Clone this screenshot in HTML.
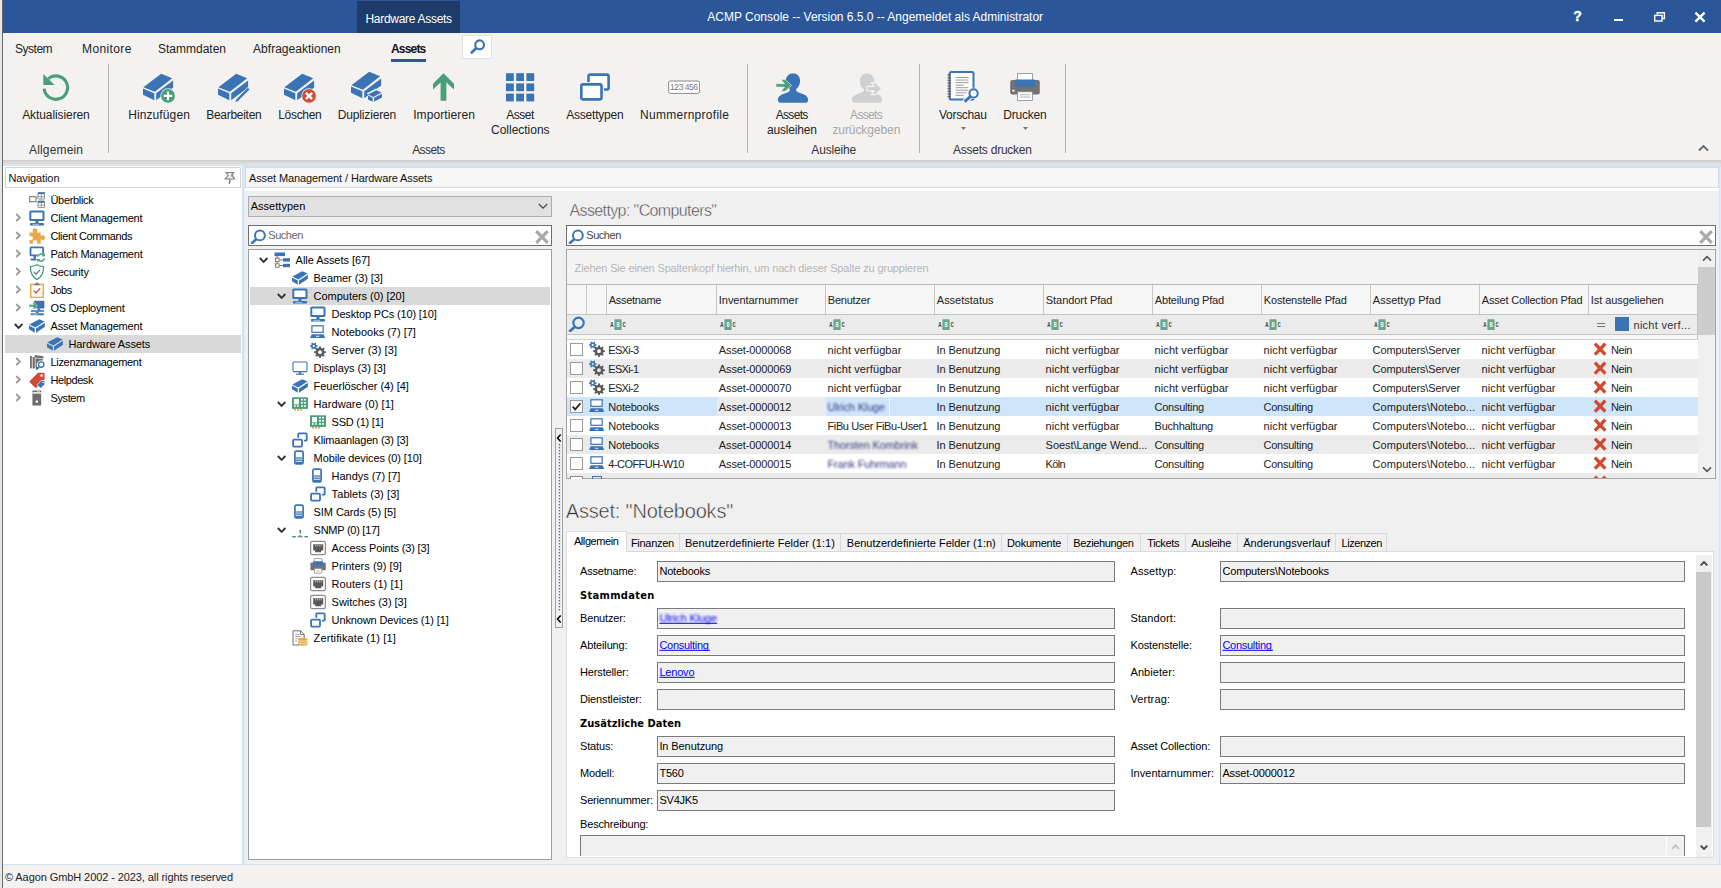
<!DOCTYPE html>
<html lang="de"><head><meta charset="utf-8"><title>ACMP Console</title>
<style>
html,body{margin:0;padding:0;width:1721px;height:888px;overflow:hidden;background:#f0f0f0;font-family:"Liberation Sans",sans-serif}
#app{position:relative;width:1721px;height:888px;overflow:hidden}
#app>div{position:absolute}
#tx{position:absolute;left:0;top:0;pointer-events:none}
#tx text{font-family:"Liberation Sans",sans-serif;white-space:pre}
</style></head><body><div id="app">
<div style="left:0px;top:0px;width:1721px;height:33px;background:#2b579a;"></div>
<div style="left:357px;top:1px;width:103px;height:32px;background:#1e3c6b;"></div>
<svg style="position:absolute;left:1571px;top:8px" width="14" height="17" viewBox="0 0 14 17"><text x="6.6" y="13.4" font-family="Liberation Sans, sans-serif" font-weight="bold" font-size="14" fill="#fff" stroke="#fff" stroke-width="0.4" text-anchor="middle">?</text></svg>
<div style="left:1614px;top:19px;width:9px;height:2px;background:#fff;"></div>
<svg style="position:absolute;left:1653px;top:11px" width="13" height="12" viewBox="0 0 13 12"><path d="M4.2,3.6V1.7h7.2v5.8h-2" fill="none" stroke="#fff" stroke-width="1.4"/><rect x="1.7" y="4.4" width="7.3" height="5.6" fill="none" stroke="#fff" stroke-width="1.4"/></svg>
<svg style="position:absolute;left:1694px;top:11px" width="12" height="12" viewBox="0 0 12 12"><path d="M1.4,1.6L10.6,10.6M10.6,1.6L1.4,10.6" stroke="#fff" stroke-width="2.3"/></svg>
<div style="left:0px;top:33px;width:1721px;height:127px;background:#f3f2f1;"></div>
<div style="left:391px;top:59px;width:35px;height:3px;background:#2b579a;"></div>
<div style="left:462px;top:35px;width:30px;height:24px;background:#fff;border:1px solid #e1dfdd;box-sizing:border-box;"></div>
<svg style="position:absolute;left:469px;top:39px" width="16" height="16" viewBox="0 0 16 16"><circle cx="10.6" cy="5.8" r="4.4" fill="#fff" stroke="#3b74b5" stroke-width="2.1"/><path d="M7.4,9 L1.9,14.2" stroke="#3b74b5" stroke-width="2.6"/></svg>
<div style="left:108px;top:64px;width:1px;height:89px;background:#b5b3b1;"></div>
<div style="left:747px;top:64px;width:1px;height:89px;background:#b5b3b1;"></div>
<div style="left:919px;top:64px;width:1px;height:89px;background:#b5b3b1;"></div>
<div style="left:1065px;top:64px;width:1px;height:89px;background:#b5b3b1;"></div>
<svg style="position:absolute;left:40px;top:71px" width="32" height="32" viewBox="0 0 32 32"><path d="M8.4,7.6 A11.7,11.7 0 1 1 4.2,17.6" fill="none" stroke="#4a9e7a" stroke-width="3.1"/><polygon points="3.3,2.9 3.3,14 14.6,14" fill="#4a9e7a"/></svg>
<svg style="position:absolute;left:143px;top:71px" width="32" height="32" viewBox="0 0 32 32"><polygon points="0.4,16.2 18.2,2.8 29.2,7.2 11.8,20.8" fill="#3b74b5"/><polygon points="0,17.6 11.3,22.3 11.3,29.3 0,23.8" fill="#3b74b5"/><polygon points="13.2,22.3 30.1,9.6 30.1,16.6 13.2,29.3" fill="#3b74b5"/><circle cx="25" cy="24.9" r="7.6" fill="#f3f2f1"/><circle cx="25" cy="24.9" r="6.9" fill="#4a9e7a"/><path d="M25,20.6v8.6M20.7,24.9h8.6" stroke="#fff" stroke-width="2.1"/></svg>
<svg style="position:absolute;left:218px;top:71px" width="32" height="32" viewBox="0 0 32 32"><polygon points="0.4,16.2 18.2,2.8 29.2,7.2 11.8,20.8" fill="#3b74b5"/><polygon points="0,17.6 11.3,22.3 11.3,29.3 0,23.8" fill="#3b74b5"/><polygon points="13.2,22.3 30.1,9.6 30.1,16.6 13.2,29.3" fill="#3b74b5"/><path d="M31.3,17.5 L17.5,31.5" stroke="#f3f2f1" stroke-width="4.2"/><path d="M30.6,17.6 L19.6,28.8" stroke="#3b74b5" stroke-width="2.3"/><polygon points="18.9,27.6 20.9,29.6 17.3,31.2" fill="#3b74b5"/></svg>
<svg style="position:absolute;left:284px;top:71px" width="32" height="32" viewBox="0 0 32 32"><polygon points="0.4,16.2 18.2,2.8 29.2,7.2 11.8,20.8" fill="#3b74b5"/><polygon points="0,17.6 11.3,22.3 11.3,29.3 0,23.8" fill="#3b74b5"/><polygon points="13.2,22.3 30.1,9.6 30.1,16.6 13.2,29.3" fill="#3b74b5"/><circle cx="25" cy="24.9" r="7.6" fill="#f3f2f1"/><circle cx="25" cy="24.9" r="6.9" fill="#d04a35"/><path d="M21.9,21.8l6.2,6.2M28.1,21.8l-6.2,6.2" stroke="#fff" stroke-width="2.4"/></svg>
<svg style="position:absolute;left:351px;top:71px" width="32" height="32" viewBox="0 0 32 32"><polygon points="0.4,14.2 18.2,0.8 29.2,5.2 11.8,18.8" fill="#3b74b5"/><polygon points="0,15.6 11.3,20.3 11.3,27.3 0,21.8" fill="#3b74b5"/><polygon points="13.2,20.3 30.1,7.6 30.1,14.6 13.2,27.3" fill="#3b74b5"/><polygon points="15.5,22.5 25,17.6 32.5,21.3 22.5,26.6" fill="#f3f2f1"/><polygon points="17.2,23.4 25.2,19.3 30.6,21.6 22.3,25.9" fill="#3b74b5"/><polygon points="17,24.6 21.7,26.8 21.7,30.8 17,28.4" fill="#3b74b5"/><polygon points="23.1,26.8 31,22.7 31,26.6 23.1,30.8" fill="#3b74b5"/></svg>
<svg style="position:absolute;left:428px;top:71px" width="32" height="32" viewBox="0 0 32 32"><polygon points="15.5,2.2 26,12.7 26,18.6 18.4,11.4 18.4,29.7 12.6,29.7 12.6,11.4 5,18.6 5,12.7" fill="#4a9e7a"/></svg>
<svg style="position:absolute;left:504px;top:71px" width="32" height="32" viewBox="0 0 32 32"><rect x="2.0" y="2.2" width="7.8" height="7.8" fill="#3b74b5"/><rect x="12.2" y="2.2" width="7.8" height="7.8" fill="#3b74b5"/><rect x="22.4" y="2.2" width="7.8" height="7.8" fill="#3b74b5"/><rect x="2.0" y="12.399999999999999" width="7.8" height="7.8" fill="#3b74b5"/><rect x="12.2" y="12.399999999999999" width="7.8" height="7.8" fill="#3b74b5"/><rect x="22.4" y="12.399999999999999" width="7.8" height="7.8" fill="#3b74b5"/><rect x="2.0" y="22.599999999999998" width="7.8" height="7.8" fill="#3b74b5"/><rect x="12.2" y="22.599999999999998" width="7.8" height="7.8" fill="#3b74b5"/><rect x="22.4" y="22.599999999999998" width="7.8" height="7.8" fill="#3b74b5"/></svg>
<svg style="position:absolute;left:579px;top:71px" width="32" height="32" viewBox="0 0 32 32"><rect x="9.5" y="3.6" width="20.1" height="14.9" rx="1.8" fill="#fff" stroke="#3b74b5" stroke-width="2.6"/><rect x="2.3" y="13.4" width="20.2" height="15" rx="1.8" fill="#f3f2f1" stroke="#f3f2f1" stroke-width="5"/><rect x="2.3" y="13.4" width="20.2" height="15" rx="1.8" fill="#fff" stroke="#3b74b5" stroke-width="2.6"/></svg>
<svg style="position:absolute;left:668px;top:71px" width="32" height="32" viewBox="0 0 32 32"><rect x="0.6" y="10" width="31" height="12.4" rx="2" fill="#fff" stroke="#8a8a8a" stroke-width="1"/><text x="16.1" y="19.3" font-family="Liberation Sans, sans-serif" font-size="8.5" fill="#777" text-anchor="middle" textLength="28">123 456</text></svg>
<svg style="position:absolute;left:776px;top:71px" width="32" height="32" viewBox="0 0 32 32"><path d="M16.8,2.3 c4.4,0 7.3,3.3 7.3,7.6 c0,3.6 -1.9,6.6 -3.9,8.2 c-0.3,1.8 0.6,2.7 2.6,3.4 c5.6,1.9 9.3,3.3 9.3,7.6 c0,1.7 -1,2.6 -2.6,2.6 h-25 c-1.7,0 -2.6,-0.9 -2.6,-2.6 c0,-4.3 3.7,-5.7 9.3,-7.6 c2,-0.7 2.9,-1.6 2.6,-3.4 c-2,-1.6 -3.9,-4.6 -3.9,-8.2 c0,-4.3 2.9,-7.6 7.3,-7.6z" fill="#3b74b5"/><polygon points="0,12.7 8.5,12.7 5.2,8.6 9.2,8.6 15.6,14.4 9.2,20.2 5.2,20.2 8.5,16.1 0,16.1" fill="#4a9e7a" stroke="#f3f2f1" stroke-width="0.6"/></svg>
<svg style="position:absolute;left:850px;top:71px" width="32" height="32" viewBox="0 0 32 32"><path d="M16.8,2.3 c4.4,0 7.3,3.3 7.3,7.6 c0,3.6 -1.9,6.6 -3.9,8.2 c-0.3,1.8 0.6,2.7 2.6,3.4 c5.6,1.9 9.3,3.3 9.3,7.6 c0,1.7 -1,2.6 -2.6,2.6 h-25 c-1.7,0 -2.6,-0.9 -2.6,-2.6 c0,-4.3 3.7,-5.7 9.3,-7.6 c2,-0.7 2.9,-1.6 2.6,-3.4 c-2,-1.6 -3.9,-4.6 -3.9,-8.2 c0,-4.3 2.9,-7.6 7.3,-7.6z" fill="#d0d0d0"/><polygon points="17,15.4 24.3,15.4 21.5,11.6 25.5,11.6 31.6,17.6 25.5,23.6 21.5,23.6 24.3,19.8 17,19.8" fill="#d0d0d0" stroke="#f3f2f1" stroke-width="1.3"/></svg>
<svg style="position:absolute;left:947px;top:71px" width="32" height="32" viewBox="0 0 32 32"><rect x="2.7" y="1" width="23.8" height="27.6" rx="1.6" fill="#fff" stroke="#3b74b5" stroke-width="2"/><rect x="0.6" y="3.3" width="3.4" height="1.5" fill="#666"/><rect x="0.6" y="6.0" width="3.4" height="1.5" fill="#666"/><rect x="0.6" y="8.7" width="3.4" height="1.5" fill="#666"/><rect x="0.6" y="11.400000000000002" width="3.4" height="1.5" fill="#666"/><rect x="0.6" y="14.100000000000001" width="3.4" height="1.5" fill="#666"/><rect x="0.6" y="16.8" width="3.4" height="1.5" fill="#666"/><rect x="0.6" y="19.500000000000004" width="3.4" height="1.5" fill="#666"/><rect x="0.6" y="22.200000000000003" width="3.4" height="1.5" fill="#666"/><rect x="0.6" y="24.900000000000002" width="3.4" height="1.5" fill="#666"/><rect x="8.6" y="6.0" width="13" height="1" fill="#9a9a9a"/><rect x="8.6" y="8.55" width="13" height="1" fill="#9a9a9a"/><rect x="8.6" y="11.1" width="13" height="1" fill="#9a9a9a"/><rect x="8.6" y="13.649999999999999" width="8" height="1" fill="#9a9a9a"/><rect x="8.6" y="16.2" width="13" height="1" fill="#9a9a9a"/><rect x="8.6" y="18.75" width="13" height="1" fill="#9a9a9a"/><rect x="8.6" y="21.299999999999997" width="11" height="1" fill="#9a9a9a"/><rect x="8.6" y="23.849999999999998" width="8" height="1" fill="#9a9a9a"/><path d="M23.6,25.6 L17,31.2" stroke="#f3f2f1" stroke-width="5"/><circle cx="26.6" cy="22.4" r="5.6" fill="#f3f2f1"/><path d="M23.6,25.4 L17.6,30.6" stroke="#3b74b5" stroke-width="2.8"/><circle cx="26.6" cy="22.4" r="4.1" fill="#fff" stroke="#3b74b5" stroke-width="2"/></svg>
<svg style="position:absolute;left:960px;top:126.6px" width="7" height="4" viewBox="0 0 7 4"><polygon points="1,0 6,0 3.5,3" fill="#777"/></svg>
<svg style="position:absolute;left:1009px;top:71px" width="32" height="32" viewBox="0 0 32 32"><rect x="1.2" y="9" width="29.6" height="14.6" rx="2" fill="#727272"/><rect x="8.4" y="2.6" width="15.2" height="8" fill="#fff" stroke="#8a8a8a" stroke-width="0.8"/><rect x="6" y="8.4" width="20" height="7.4" rx="1" fill="#3b74b5"/><rect x="8.4" y="20.8" width="15.2" height="8.6" fill="#fff" stroke="#8a8a8a" stroke-width="0.8"/><rect x="10.8" y="23.3" width="10.4" height="0.9" fill="#aaa"/><rect x="10.8" y="25.6" width="10.4" height="0.9" fill="#aaa"/><rect x="3.2" y="18.8" width="2.4" height="1.8" rx="0.6" fill="#fff"/></svg>
<svg style="position:absolute;left:1022px;top:126.6px" width="7" height="4" viewBox="0 0 7 4"><polygon points="1,0 6,0 3.5,3" fill="#777"/></svg>
<svg style="position:absolute;left:1698px;top:144px" width="11" height="8" viewBox="0 0 11 8"><path d="M1,6.5L5.5,2L10,6.5" fill="none" stroke="#666" stroke-width="1.8"/></svg>
<div style="left:0;top:160px;width:1721px;height:5px;background:linear-gradient(#cdcdcd,#e6e6e6)"></div>
<div style="left:0px;top:165px;width:1721px;height:700px;background:#f0f0f0;"></div>
<div style="left:0px;top:165px;width:1721px;height:2px;background:#cfe5f8;"></div>
<div style="left:241px;top:167px;width:3px;height:697px;background:#cfe6fa;"></div>
<div style="left:244px;top:167px;width:1px;height:697px;background:#e0ebf5;"></div>
<div style="left:1719px;top:167px;width:1px;height:697px;background:#cfe6fa;"></div>
<div style="left:1720px;top:167px;width:1px;height:697px;background:#ddedfb;"></div>
<div style="left:0px;top:864px;width:1721px;height:1px;background:#cde4f7;"></div>
<div style="left:0px;top:865px;width:1721px;height:23px;background:#f3f2f1;"></div>
<div style="left:0px;top:0px;width:2px;height:888px;background:#e4e6e8;"></div>
<div style="left:2px;top:0px;width:1px;height:888px;background:#6a6a6a;"></div>
<div style="left:3px;top:166px;width:239px;height:698px;background:#fff;"></div>
<div style="left:5px;top:167px;width:236px;height:21px;background:#fff;border:1px solid #d4d4d4;box-sizing:border-box;"></div>
<svg style="position:absolute;left:224px;top:171px" width="12" height="14" viewBox="0 0 12 14"><path d="M2,1.5H9.6L8.4,4.4L10.6,8H1.2L4.2,4.4Z" fill="#ececec" stroke="#7d7d7d" stroke-width="1.1"/><path d="M8,2.4v3.4" stroke="#8a8a8a" stroke-width="1.4"/><path d="M5.9,8.2L5.3,12.8" stroke="#7d7d7d" stroke-width="1.4"/></svg>
<svg style="position:absolute;left:29px;top:192px" width="16" height="16" viewBox="0 0 16 16"><rect x="0.7" y="4.7" width="6.4" height="5" fill="#fff" stroke="#777" stroke-width="1.1"/><rect x="9" y="0.4" width="6.6" height="6.6" rx="0.6" fill="#fff" stroke="#8a8a8a" stroke-width="1"/><rect x="9" y="0.4" width="6.6" height="1.8" fill="#3b74b5"/><path d="M12.3,2.4v4.6M9,4.6h6.6" stroke="#8a8a8a" stroke-width="0.8"/><rect x="9" y="9" width="6.6" height="6.6" rx="0.6" fill="#fff" stroke="#8a8a8a" stroke-width="1"/><rect x="9" y="9" width="6.6" height="1.8" fill="#3b74b5"/><path d="M12.3,11v4.6M9,13.2h6.6" stroke="#8a8a8a" stroke-width="0.8"/></svg>
<svg style="position:absolute;left:29px;top:210px" width="16" height="16" viewBox="0 0 16 16"><rect x="1.3" y="1.5" width="13.2" height="8.6" rx="0.6" fill="#fff" stroke="#3b74b5" stroke-width="2"/><rect x="6.4" y="11" width="3.1" height="2" fill="#3b74b5"/><rect x="0.9" y="12.9" width="14.2" height="2.7" rx="1.2" fill="#3b74b5"/><rect x="3.4" y="13.9" width="6.6" height="0.8" fill="#bcd3ec"/></svg>
<svg style="position:absolute;left:15.4px;top:213.4px" width="7" height="9" viewBox="0 0 7 9"><path d="M1.2,1 L4.8,4.5 L1.2,8" fill="none" stroke="#9a9a9a" stroke-width="1.8"/></svg>
<svg style="position:absolute;left:29px;top:228px" width="16" height="16" viewBox="0 0 16 16"><path transform="translate(8,7.95) scale(1.2) translate(-8.3,-8.55)" d="M2,5.6h3.2c-0.9,-1.2 -0.8,-3.4 1.4,-3.4c2.2,0 2.3,2.2 1.4,3.4h3.4v3c1.2,-0.9 3.6,-0.8 3.6,1.4c0,2.2 -2.4,2.3 -3.6,1.4v3.6h-3.2c0.7,-1.2 0.6,-2.8 -1.5,-2.8c-2.1,0 -2.2,1.6 -1.5,2.8h-3.2v-3.4c1.2,0.8 2.8,0.6 2.8,-1.3c0,-1.9 -1.6,-2.1 -2.8,-1.3z" fill="#e8a94e"/></svg>
<svg style="position:absolute;left:15.4px;top:231.4px" width="7" height="9" viewBox="0 0 7 9"><path d="M1.2,1 L4.8,4.5 L1.2,8" fill="none" stroke="#9a9a9a" stroke-width="1.8"/></svg>
<svg style="position:absolute;left:29px;top:246px" width="16" height="16" viewBox="0 0 16 16"><rect x="1.5" y="1.3" width="12.6" height="8" rx="0.6" fill="#fff" stroke="#3b74b5" stroke-width="1.8"/><rect x="4.6" y="10" width="2.4" height="2.6" fill="#3b74b5"/><rect x="1.4" y="12.6" width="6.4" height="1.8" rx="0.8" fill="#3b74b5"/><circle cx="12" cy="11.6" r="4.6" fill="#fff"/><path d="M8.6,10.8 a3.5,3.5 0 0 1 6,-1.6 M15.4,12.4 a3.5,3.5 0 0 1 -6,1.6" fill="none" stroke="#4a9e7a" stroke-width="1.5"/><polygon points="15.8,7 15.8,10.4 12.6,10.2" fill="#4a9e7a"/><polygon points="8.2,16.2 8.2,12.8 11.4,13" fill="#4a9e7a"/></svg>
<svg style="position:absolute;left:15.4px;top:249.4px" width="7" height="9" viewBox="0 0 7 9"><path d="M1.2,1 L4.8,4.5 L1.2,8" fill="none" stroke="#9a9a9a" stroke-width="1.8"/></svg>
<svg style="position:absolute;left:29px;top:264px" width="16" height="16" viewBox="0 0 16 16"><path d="M8,0.8c2,1.2 4.2,1.7 6.6,1.8c0,6 -1.6,10.4 -6.6,13c-5,-2.6 -6.6,-7 -6.6,-13c2.4,-0.1 4.6,-0.6 6.6,-1.8z" fill="#fff" stroke="#3a9a72" stroke-width="1.2"/><path d="M4.8,7.8l2.2,2.4l4.2,-4.6" fill="none" stroke="#777" stroke-width="1.3"/></svg>
<svg style="position:absolute;left:15.4px;top:267.4px" width="7" height="9" viewBox="0 0 7 9"><path d="M1.2,1 L4.8,4.5 L1.2,8" fill="none" stroke="#9a9a9a" stroke-width="1.8"/></svg>
<svg style="position:absolute;left:29px;top:282px" width="16" height="16" viewBox="0 0 16 16"><rect x="1.8" y="2.4" width="12.4" height="13" fill="#fff" stroke="#e8a94e" stroke-width="1.5"/><path d="M5.4,3.2v-1.4h1.4c0,-1.8 2.4,-1.8 2.4,0h1.4v1.4z" fill="#777"/><path d="M4.8,8.6l2.2,2.4l4.2,-4.6" fill="none" stroke="#d04a35" stroke-width="1.4"/></svg>
<svg style="position:absolute;left:15.4px;top:285.4px" width="7" height="9" viewBox="0 0 7 9"><path d="M1.2,1 L4.8,4.5 L1.2,8" fill="none" stroke="#9a9a9a" stroke-width="1.8"/></svg>
<svg style="position:absolute;left:29px;top:300px" width="16" height="16" viewBox="0 0 16 16"><rect x="5" y="0.8" width="10.4" height="7.6" rx="0.6" fill="#3b74b5"/><rect x="8.6" y="8.4" width="2.6" height="2.2" fill="#3b74b5"/><rect x="2" y="10.2" width="13" height="1.6" fill="#3b74b5"/><rect x="7" y="11.8" width="2.4" height="1.4" fill="#3b74b5"/><rect x="1.6" y="13.2" width="13.4" height="2" rx="0.9" fill="#3b74b5"/><rect x="3.6" y="13.8" width="5" height="0.7" fill="#cfe0f2"/><polygon points="0,4.6 4.6,4.6 3,2.6 5.4,2.6 8.4,5.8 5.4,9 3,9 4.6,7 0,7" fill="#4a9e7a" stroke="#fff" stroke-width="0.5"/></svg>
<svg style="position:absolute;left:15.4px;top:303.4px" width="7" height="9" viewBox="0 0 7 9"><path d="M1.2,1 L4.8,4.5 L1.2,8" fill="none" stroke="#9a9a9a" stroke-width="1.8"/></svg>
<svg style="position:absolute;left:29px;top:318px" width="16" height="16" viewBox="0 0 16 16"><polygon points="0.3,6.5 10.2,1.2 15.6,3.6 6.3,9.5" fill="#3b74b5"/><polygon points="0,7.5 5.8,10.5 5.8,14.7 0,11.2" fill="#3b74b5"/><polygon points="7,10.5 15.9,4.8 15.9,8.7 7,14.7" fill="#3b74b5"/></svg>
<svg style="position:absolute;left:13.8px;top:323.4px" width="10" height="7" viewBox="0 0 10 7"><path d="M0.8,1 L4.6,4.8 L8.4,1" fill="none" stroke="#333" stroke-width="1.9"/></svg>
<div style="left:5px;top:335px;width:236px;height:18px;background:#d9d9d9;"></div>
<svg style="position:absolute;left:47px;top:336px" width="16" height="16" viewBox="0 0 16 16"><polygon points="0.3,6.5 10.2,1.2 15.6,3.6 6.3,9.5" fill="#3b74b5"/><polygon points="0,7.5 5.8,10.5 5.8,14.7 0,11.2" fill="#3b74b5"/><polygon points="7,10.5 15.9,4.8 15.9,8.7 7,14.7" fill="#3b74b5"/></svg>
<svg style="position:absolute;left:29px;top:354px" width="16" height="16" viewBox="0 0 16 16"><rect x="1" y="2" width="1.8" height="12.4" fill="#6e6e6e"/><rect x="3.6" y="3" width="2.2" height="11.4" fill="#6e6e6e"/><polygon points="5.6,1 14.4,2.2 14.2,4.4 5.8,3.4" fill="#6e6e6e"/><polygon points="6.4,4.2 13.8,5 12,14.4 6.6,14.4" fill="#6e6e6e"/><circle cx="12" cy="10.8" r="4.3" fill="#fff"/><path d="M9.8,13 L7.2,15.6" stroke="#3b74b5" stroke-width="1.8"/><circle cx="12.2" cy="10.6" r="2.7" fill="#fff" stroke="#3b74b5" stroke-width="1.4"/></svg>
<svg style="position:absolute;left:15.4px;top:357.4px" width="7" height="9" viewBox="0 0 7 9"><path d="M1.2,1 L4.8,4.5 L1.2,8" fill="none" stroke="#9a9a9a" stroke-width="1.8"/></svg>
<svg style="position:absolute;left:29px;top:372px" width="16" height="16" viewBox="0 0 16 16"><path d="M9,0.8h5.6c0.6,0 1,0.4 1,1v5.6l-8,8c-0.5,0.5 -1.1,0.5 -1.6,0l-5,-5c-0.5,-0.5 -0.5,-1.1 0,-1.6z" fill="#d04a35"/><circle cx="12.6" cy="3.6" r="1.3" fill="#fff"/><path d="M12,8.6h3.2c0.4,0 0.6,0.2 0.6,0.6v3.2l-3.6,3.6c-0.3,0.3 -0.7,0.3 -1,0l-2.6,-2.6c-0.3,-0.3 -0.3,-0.7 0,-1z" fill="#3b74b5" stroke="#fff" stroke-width="0.7"/><circle cx="14" cy="10.4" r="0.7" fill="#fff"/></svg>
<svg style="position:absolute;left:15.4px;top:375.4px" width="7" height="9" viewBox="0 0 7 9"><path d="M1.2,1 L4.8,4.5 L1.2,8" fill="none" stroke="#9a9a9a" stroke-width="1.8"/></svg>
<svg style="position:absolute;left:29px;top:390px" width="16" height="16" viewBox="0 0 16 16"><rect x="3.4" y="0.6" width="8.8" height="15" rx="0.6" fill="#6e6e6e"/><rect x="3.4" y="2.2" width="8.8" height="1.4" fill="#fff"/><rect x="8.2" y="1" width="2.6" height="0.8" fill="#ddd"/><circle cx="7.8" cy="11.6" r="1.3" fill="#fff"/></svg>
<svg style="position:absolute;left:15.4px;top:393.4px" width="7" height="9" viewBox="0 0 7 9"><path d="M1.2,1 L4.8,4.5 L1.2,8" fill="none" stroke="#9a9a9a" stroke-width="1.8"/></svg>
<div style="left:245px;top:167px;width:1474px;height:21px;background:#f6f6f6;border:1px solid #dadada;box-sizing:border-box;"></div>
<div style="left:245px;top:188px;width:1474px;height:3px;background:#fff;"></div>
<div style="left:248px;top:196px;width:304px;height:21px;background:#e1e1e1;border:1px solid #adadad;box-sizing:border-box;"></div>
<svg style="position:absolute;left:538px;top:203px" width="10" height="7" viewBox="0 0 10 7"><path d="M0.8,1 L5,5.2 L9.2,1" fill="none" stroke="#444" stroke-width="1.2"/></svg>
<div style="left:248px;top:225px;width:304px;height:21px;background:#fff;border:1px solid #6d6d6d;box-sizing:border-box;"></div>
<svg style="position:absolute;left:250px;top:228px" width="16" height="16" viewBox="0 0 16 16"><circle cx="9.9" cy="7.4" r="4.9" fill="none" stroke="#3b74b5" stroke-width="2"/><path d="M6.5,11 L1.2,15.8" stroke="#3b74b5" stroke-width="2.5" stroke-linecap="butt"/></svg>
<svg style="position:absolute;left:535px;top:230px" width="14" height="14" viewBox="0 0 14 14"><path d="M1.2,1.2 L12.8,12.8 M12.8,1.2 L1.2,12.8" stroke="#a9a9a9" stroke-width="3.2" stroke-linecap="butt"/></svg>
<div style="left:248px;top:249px;width:304px;height:611px;background:#fff;border:1px solid #9a9ea5;box-sizing:border-box;"></div>
<svg style="position:absolute;left:274px;top:252px" width="16" height="16" viewBox="0 0 16 16"><rect x="0.5" y="0.5" width="10.5" height="3.6" fill="#3b74b5"/><rect x="9" y="6.2" width="7" height="3.4" fill="#3b74b5"/><rect x="9" y="11.8" width="7" height="3.4" fill="#3b74b5"/><path d="M3.2,4v9.6M5.5,7.9h3.5M5.5,13.5h3.5" stroke="#777" stroke-width="1" fill="none"/><rect x="1.5" y="6.2" width="3.6" height="3.4" fill="#fff" stroke="#777" stroke-width="1"/><rect x="1.5" y="11.8" width="3.6" height="3.4" fill="#fff" stroke="#777" stroke-width="1"/></svg>
<svg style="position:absolute;left:258.8px;top:257.2px" width="10" height="7" viewBox="0 0 10 7"><path d="M0.8,1 L4.6,4.8 L8.4,1" fill="none" stroke="#333" stroke-width="1.9"/></svg>
<svg style="position:absolute;left:292px;top:270px" width="16" height="16" viewBox="0 0 16 16"><polygon points="0.3,6.5 10.2,1.2 15.6,3.6 6.3,9.5" fill="#3b74b5"/><polygon points="0,7.5 5.8,10.5 5.8,14.7 0,11.2" fill="#3b74b5"/><polygon points="7,10.5 15.9,4.8 15.9,8.7 7,14.7" fill="#3b74b5"/></svg>
<div style="left:250px;top:287px;width:300px;height:18px;background:#d9d9d9;"></div>
<svg style="position:absolute;left:292px;top:288px" width="16" height="16" viewBox="0 0 16 16"><rect x="1.3" y="1.5" width="13.2" height="8.6" rx="0.6" fill="#fff" stroke="#3b74b5" stroke-width="2"/><rect x="6.4" y="11" width="3.1" height="2" fill="#3b74b5"/><rect x="0.9" y="12.9" width="14.2" height="2.7" rx="1.2" fill="#3b74b5"/><rect x="3.4" y="13.9" width="6.6" height="0.8" fill="#bcd3ec"/></svg>
<svg style="position:absolute;left:276.8px;top:293.2px" width="10" height="7" viewBox="0 0 10 7"><path d="M0.8,1 L4.6,4.8 L8.4,1" fill="none" stroke="#333" stroke-width="1.9"/></svg>
<svg style="position:absolute;left:310px;top:306px" width="16" height="16" viewBox="0 0 16 16"><rect x="1.3" y="1.5" width="13.2" height="8.6" rx="0.6" fill="#fff" stroke="#3b74b5" stroke-width="2"/><rect x="6.4" y="11" width="3.1" height="2" fill="#3b74b5"/><rect x="0.9" y="12.9" width="14.2" height="2.7" rx="1.2" fill="#3b74b5"/><rect x="3.4" y="13.9" width="6.6" height="0.8" fill="#bcd3ec"/></svg>
<svg style="position:absolute;left:310px;top:324px" width="16" height="16" viewBox="0 0 16 16"><rect x="1.9" y="1.8" width="11.3" height="6.5" fill="#fff" stroke="#3b74b5" stroke-width="1.2"/><polygon points="1.6,10.2 13.6,10.2 15.2,14 0.1,14" fill="#3b74b5"/><rect x="6" y="11.8" width="3.4" height="1" fill="#dce8f5"/></svg>
<svg style="position:absolute;left:310px;top:342px" width="16" height="16" viewBox="0 0 16 16"><path d="M15.97,9.61 L15.97,10.79 L14.11,11.45 L13.79,12.23 L14.64,14.01 L13.81,14.84 L12.03,13.99 L11.25,14.31 L10.59,16.17 L9.41,16.17 L8.75,14.31 L7.97,13.99 L6.19,14.84 L5.36,14.01 L6.21,12.23 L5.89,11.45 L4.03,10.79 L4.03,9.61 L5.89,8.95 L6.21,8.17 L5.36,6.39 L6.19,5.56 L7.97,6.41 L8.75,6.09 L9.41,4.23 L10.59,4.23 L11.25,6.09 L12.03,6.41 L13.81,5.56 L14.64,6.39 L13.79,8.17 L14.11,8.95Z M11.90,10.20 A1.9,1.9 0 1 0 8.10,10.20 A1.9,1.9 0 1 0 11.90,10.20Z" fill="#5c5c5c" fill-rule="evenodd"/><path d="M7.57,3.49 L7.57,4.51 L6.10,4.99 L5.76,5.58 L6.07,7.09 L5.19,7.60 L4.04,6.58 L3.36,6.58 L2.21,7.60 L1.33,7.09 L1.64,5.58 L1.30,4.99 L-0.17,4.51 L-0.17,3.49 L1.30,3.01 L1.64,2.42 L1.33,0.91 L2.21,0.40 L3.36,1.42 L4.04,1.42 L5.19,0.40 L6.07,0.91 L5.76,2.42 L6.10,3.01Z M4.80,4.00 A1.1,1.1 0 1 0 2.60,4.00 A1.1,1.1 0 1 0 4.80,4.00Z" fill="#3b74b5" fill-rule="evenodd"/></svg>
<svg style="position:absolute;left:292px;top:360px" width="16" height="16" viewBox="0 0 16 16"><rect x="1" y="2" width="14" height="9.6" rx="1.2" fill="#fff" stroke="#3b74b5" stroke-width="1.1"/><rect x="6.8" y="12" width="2.4" height="1.8" fill="#3b74b5"/><rect x="4" y="13.6" width="8" height="1.2" fill="#3b74b5"/></svg>
<svg style="position:absolute;left:292px;top:378px" width="16" height="16" viewBox="0 0 16 16"><polygon points="0.3,6.5 10.2,1.2 15.6,3.6 6.3,9.5" fill="#3b74b5"/><polygon points="0,7.5 5.8,10.5 5.8,14.7 0,11.2" fill="#3b74b5"/><polygon points="7,10.5 15.9,4.8 15.9,8.7 7,14.7" fill="#3b74b5"/></svg>
<svg style="position:absolute;left:292px;top:396px" width="16" height="16" viewBox="0 0 16 16"><rect x="0" y="1.3" width="16" height="11.6" fill="#4a9e7a"/><rect x="2" y="3" width="5" height="5.4" fill="#fff"/><rect x="9" y="2.9" width="2" height="1.6" fill="#fff"/><rect x="12" y="2.9" width="2" height="1.6" fill="#fff"/><rect x="9" y="6.0" width="2" height="1.6" fill="#fff"/><rect x="12" y="6.0" width="2" height="1.6" fill="#fff"/><rect x="9" y="9.2" width="2" height="1.6" fill="#fff"/><rect x="12" y="9.2" width="2" height="1.6" fill="#fff"/><rect x="2" y="9.2" width="1.7" height="1.6" fill="#fff"/><rect x="5" y="9.2" width="1.7" height="1.6" fill="#fff"/><rect x="2" y="12.9" width="2" height="1.8" fill="#e8a94e"/><rect x="5.2" y="12.9" width="2" height="1.8" fill="#e8a94e"/><rect x="8.2" y="12.9" width="2" height="1.8" fill="#e8a94e"/></svg>
<svg style="position:absolute;left:276.8px;top:401.2px" width="10" height="7" viewBox="0 0 10 7"><path d="M0.8,1 L4.6,4.8 L8.4,1" fill="none" stroke="#333" stroke-width="1.9"/></svg>
<svg style="position:absolute;left:310px;top:414px" width="16" height="16" viewBox="0 0 16 16"><rect x="0" y="1.3" width="16" height="11.6" fill="#4a9e7a"/><rect x="2" y="3" width="5" height="5.4" fill="#fff"/><rect x="9" y="2.9" width="2" height="1.6" fill="#fff"/><rect x="12" y="2.9" width="2" height="1.6" fill="#fff"/><rect x="9" y="6.0" width="2" height="1.6" fill="#fff"/><rect x="12" y="6.0" width="2" height="1.6" fill="#fff"/><rect x="9" y="9.2" width="2" height="1.6" fill="#fff"/><rect x="12" y="9.2" width="2" height="1.6" fill="#fff"/><rect x="2" y="9.2" width="1.7" height="1.6" fill="#fff"/><rect x="5" y="9.2" width="1.7" height="1.6" fill="#fff"/><rect x="2" y="12.9" width="2" height="1.8" fill="#e8a94e"/><rect x="5.2" y="12.9" width="2" height="1.8" fill="#e8a94e"/><rect x="8.2" y="12.9" width="2" height="1.8" fill="#e8a94e"/></svg>
<svg style="position:absolute;left:292px;top:432px" width="16" height="16" viewBox="0 0 16 16"><rect x="6.3" y="1.4" width="8.4" height="7.3" rx="0.8" fill="none" stroke="#3b74b5" stroke-width="1.8"/><rect x="1.1" y="7.7" width="8.9" height="6.9" rx="0.8" fill="#fff" stroke="#fff" stroke-width="4"/><rect x="1.1" y="7.7" width="8.9" height="6.9" rx="0.8" fill="#fff" stroke="#3b74b5" stroke-width="1.8"/></svg>
<svg style="position:absolute;left:292px;top:450px" width="16" height="16" viewBox="0 0 16 16"><rect x="2.9" y="1.1" width="8.2" height="12.8" rx="1.5" fill="#fff" stroke="#3b74b5" stroke-width="1.7"/><rect x="3.6" y="7.4" width="6.8" height="1.2" fill="#3b74b5"/><rect x="3.6" y="9.5" width="6.8" height="1.3" fill="#3b74b5"/><rect x="3.6" y="11.7" width="6.8" height="1.4" fill="#3b74b5"/></svg>
<svg style="position:absolute;left:276.8px;top:455.2px" width="10" height="7" viewBox="0 0 10 7"><path d="M0.8,1 L4.6,4.8 L8.4,1" fill="none" stroke="#333" stroke-width="1.9"/></svg>
<svg style="position:absolute;left:310px;top:468px" width="16" height="16" viewBox="0 0 16 16"><rect x="2.9" y="1.1" width="8.2" height="12.8" rx="1.5" fill="#fff" stroke="#3b74b5" stroke-width="1.7"/><rect x="3.6" y="7.4" width="6.8" height="1.2" fill="#3b74b5"/><rect x="3.6" y="9.5" width="6.8" height="1.3" fill="#3b74b5"/><rect x="3.6" y="11.7" width="6.8" height="1.4" fill="#3b74b5"/></svg>
<svg style="position:absolute;left:310px;top:486px" width="16" height="16" viewBox="0 0 16 16"><rect x="6.3" y="1.4" width="8.4" height="7.3" rx="0.8" fill="none" stroke="#3b74b5" stroke-width="1.8"/><rect x="1.1" y="7.7" width="8.9" height="6.9" rx="0.8" fill="#fff" stroke="#fff" stroke-width="4"/><rect x="1.1" y="7.7" width="8.9" height="6.9" rx="0.8" fill="#fff" stroke="#3b74b5" stroke-width="1.8"/></svg>
<svg style="position:absolute;left:292px;top:504px" width="16" height="16" viewBox="0 0 16 16"><rect x="2.9" y="1.1" width="8.2" height="12.8" rx="1.5" fill="#fff" stroke="#3b74b5" stroke-width="1.7"/><rect x="3.6" y="7.4" width="6.8" height="1.2" fill="#3b74b5"/><rect x="3.6" y="9.5" width="6.8" height="1.3" fill="#3b74b5"/><rect x="3.6" y="11.7" width="6.8" height="1.4" fill="#3b74b5"/></svg>
<svg style="position:absolute;left:292px;top:522px" width="16" height="16" viewBox="0 0 16 16"><rect x="7.5" y="7.8" width="1.5" height="3.6" fill="#2f9a6c"/><rect x="5.6" y="14" width="5" height="1.4" fill="#8a8a8a"/><rect x="7.2" y="13.2" width="2" height="1" fill="#8a8a8a"/><rect x="0.2" y="14" width="3.6" height="1.4" fill="#2f9a6c"/><rect x="12.4" y="14" width="3.6" height="1.4" fill="#2f9a6c"/></svg>
<svg style="position:absolute;left:276.8px;top:527.2px" width="10" height="7" viewBox="0 0 10 7"><path d="M0.8,1 L4.6,4.8 L8.4,1" fill="none" stroke="#333" stroke-width="1.9"/></svg>
<svg style="position:absolute;left:310px;top:540px" width="16" height="16" viewBox="0 0 16 16"><rect x="0.6" y="1.4" width="14.8" height="13.2" rx="1.6" fill="#fff" stroke="#8c8c8c" stroke-width="1.2"/><path d="M3.2,4.2h10v6.4h-2v1.6h-6v-1.6h-2z" fill="#595959"/><rect x="5" y="4.6" width="1.1" height="1.8" fill="#e8a94e"/><rect x="6.9" y="4.6" width="1.1" height="1.8" fill="#e8a94e"/><rect x="8.8" y="4.6" width="1.1" height="1.8" fill="#e8a94e"/><rect x="10.6" y="4.6" width="1.1" height="1.8" fill="#e8a94e"/></svg>
<svg style="position:absolute;left:310px;top:558px" width="16" height="16" viewBox="0 0 16 16"><rect x="0.4" y="4.6" width="15.4" height="7.6" rx="1.2" fill="#727272"/><rect x="4" y="0.6" width="8" height="4.4" rx="0.8" fill="#fff" stroke="#888" stroke-width="0.8"/><rect x="3.2" y="3.2" width="9.6" height="4.2" rx="0.5" fill="#3b74b5"/><rect x="4.4" y="10.4" width="7.4" height="4.8" rx="0.6" fill="#fff" stroke="#888" stroke-width="0.8"/><rect x="6.4" y="12.6" width="3.4" height="0.8" fill="#3b74b5" opacity="0.6"/></svg>
<svg style="position:absolute;left:310px;top:576px" width="16" height="16" viewBox="0 0 16 16"><rect x="0.6" y="1.4" width="14.8" height="13.2" rx="1.6" fill="#fff" stroke="#8c8c8c" stroke-width="1.2"/><path d="M3.2,4.2h10v6.4h-2v1.6h-6v-1.6h-2z" fill="#595959"/><rect x="5" y="4.6" width="1.1" height="1.8" fill="#e8a94e"/><rect x="6.9" y="4.6" width="1.1" height="1.8" fill="#e8a94e"/><rect x="8.8" y="4.6" width="1.1" height="1.8" fill="#e8a94e"/><rect x="10.6" y="4.6" width="1.1" height="1.8" fill="#e8a94e"/></svg>
<svg style="position:absolute;left:310px;top:594px" width="16" height="16" viewBox="0 0 16 16"><rect x="0.6" y="1.4" width="14.8" height="13.2" rx="1.6" fill="#fff" stroke="#8c8c8c" stroke-width="1.2"/><path d="M3.2,4.2h10v6.4h-2v1.6h-6v-1.6h-2z" fill="#595959"/><rect x="5" y="4.6" width="1.1" height="1.8" fill="#e8a94e"/><rect x="6.9" y="4.6" width="1.1" height="1.8" fill="#e8a94e"/><rect x="8.8" y="4.6" width="1.1" height="1.8" fill="#e8a94e"/><rect x="10.6" y="4.6" width="1.1" height="1.8" fill="#e8a94e"/></svg>
<svg style="position:absolute;left:310px;top:612px" width="16" height="16" viewBox="0 0 16 16"><rect x="6.3" y="1.4" width="8.4" height="7.3" rx="0.8" fill="none" stroke="#3b74b5" stroke-width="1.8"/><rect x="1.1" y="7.7" width="8.9" height="6.9" rx="0.8" fill="#fff" stroke="#fff" stroke-width="4"/><rect x="1.1" y="7.7" width="8.9" height="6.9" rx="0.8" fill="#fff" stroke="#3b74b5" stroke-width="1.8"/></svg>
<svg style="position:absolute;left:292px;top:630px" width="16" height="16" viewBox="0 0 16 16"><path d="M1,0.8h7.6l3.6,3.6v4.4h-5v6.2h-6.2z" fill="#fff" stroke="#6e6e6e" stroke-width="1"/><path d="M8.4,0.8v3.8h3.8" fill="none" stroke="#6e6e6e" stroke-width="1"/><path d="M3.2,4.4h3.6M3.2,6.6h5.4M3.2,8.8h2.4M3.2,11h1.8" stroke="#999" stroke-width="0.9"/><ellipse cx="10.8" cy="9.4" rx="5" ry="1.7" fill="#e8a94e"/><ellipse cx="10.8" cy="11.7" rx="5" ry="1.7" fill="#e8a94e"/><ellipse cx="10.8" cy="14" rx="5" ry="1.7" fill="#e8a94e"/><path d="M6,10.5c2,1.2 7.6,1.2 9.6,0M6,12.8c2,1.2 7.6,1.2 9.6,0" stroke="#fff" stroke-width="0.6" fill="none"/></svg>
<div style="left:555px;top:428px;width:8px;height:200px;background:#f0f0f0;border:1px solid #a0a0a0;box-sizing:border-box;"></div>
<svg style="position:absolute;left:558px;top:444px" width="3" height="170" viewBox="0 0 3 170"><rect x="0.8" y="0" width="1.3" height="1.4" fill="#1a78d8"/><rect x="0.8" y="3" width="1.3" height="1.4" fill="#1a78d8"/><rect x="0.8" y="6" width="1.3" height="1.4" fill="#1a78d8"/><rect x="0.8" y="9" width="1.3" height="1.4" fill="#1a78d8"/><rect x="0.8" y="12" width="1.3" height="1.4" fill="#1a78d8"/><rect x="0.8" y="15" width="1.3" height="1.4" fill="#1a78d8"/><rect x="0.8" y="18" width="1.3" height="1.4" fill="#1a78d8"/><rect x="0.8" y="21" width="1.3" height="1.4" fill="#1a78d8"/><rect x="0.8" y="24" width="1.3" height="1.4" fill="#1a78d8"/><rect x="0.8" y="27" width="1.3" height="1.4" fill="#1a78d8"/><rect x="0.8" y="30" width="1.3" height="1.4" fill="#1a78d8"/><rect x="0.8" y="33" width="1.3" height="1.4" fill="#1a78d8"/><rect x="0.8" y="36" width="1.3" height="1.4" fill="#1a78d8"/><rect x="0.8" y="39" width="1.3" height="1.4" fill="#1a78d8"/><rect x="0.8" y="42" width="1.3" height="1.4" fill="#1a78d8"/><rect x="0.8" y="45" width="1.3" height="1.4" fill="#1a78d8"/><rect x="0.8" y="48" width="1.3" height="1.4" fill="#1a78d8"/><rect x="0.8" y="51" width="1.3" height="1.4" fill="#1a78d8"/><rect x="0.8" y="54" width="1.3" height="1.4" fill="#1a78d8"/><rect x="0.8" y="57" width="1.3" height="1.4" fill="#1a78d8"/><rect x="0.8" y="60" width="1.3" height="1.4" fill="#1a78d8"/><rect x="0.8" y="63" width="1.3" height="1.4" fill="#1a78d8"/><rect x="0.8" y="66" width="1.3" height="1.4" fill="#1a78d8"/><rect x="0.8" y="69" width="1.3" height="1.4" fill="#1a78d8"/><rect x="0.8" y="72" width="1.3" height="1.4" fill="#1a78d8"/><rect x="0.8" y="75" width="1.3" height="1.4" fill="#1a78d8"/><rect x="0.8" y="78" width="1.3" height="1.4" fill="#1a78d8"/><rect x="0.8" y="81" width="1.3" height="1.4" fill="#1a78d8"/><rect x="0.8" y="84" width="1.3" height="1.4" fill="#1a78d8"/><rect x="0.8" y="87" width="1.3" height="1.4" fill="#1a78d8"/><rect x="0.8" y="90" width="1.3" height="1.4" fill="#1a78d8"/><rect x="0.8" y="93" width="1.3" height="1.4" fill="#1a78d8"/><rect x="0.8" y="96" width="1.3" height="1.4" fill="#1a78d8"/><rect x="0.8" y="99" width="1.3" height="1.4" fill="#1a78d8"/><rect x="0.8" y="102" width="1.3" height="1.4" fill="#1a78d8"/><rect x="0.8" y="105" width="1.3" height="1.4" fill="#1a78d8"/><rect x="0.8" y="108" width="1.3" height="1.4" fill="#1a78d8"/><rect x="0.8" y="111" width="1.3" height="1.4" fill="#1a78d8"/><rect x="0.8" y="114" width="1.3" height="1.4" fill="#1a78d8"/><rect x="0.8" y="117" width="1.3" height="1.4" fill="#1a78d8"/><rect x="0.8" y="120" width="1.3" height="1.4" fill="#1a78d8"/><rect x="0.8" y="123" width="1.3" height="1.4" fill="#1a78d8"/><rect x="0.8" y="126" width="1.3" height="1.4" fill="#1a78d8"/><rect x="0.8" y="129" width="1.3" height="1.4" fill="#1a78d8"/><rect x="0.8" y="132" width="1.3" height="1.4" fill="#1a78d8"/><rect x="0.8" y="135" width="1.3" height="1.4" fill="#1a78d8"/><rect x="0.8" y="138" width="1.3" height="1.4" fill="#1a78d8"/><rect x="0.8" y="141" width="1.3" height="1.4" fill="#1a78d8"/><rect x="0.8" y="144" width="1.3" height="1.4" fill="#1a78d8"/><rect x="0.8" y="147" width="1.3" height="1.4" fill="#1a78d8"/><rect x="0.8" y="150" width="1.3" height="1.4" fill="#1a78d8"/><rect x="0.8" y="153" width="1.3" height="1.4" fill="#1a78d8"/><rect x="0.8" y="156" width="1.3" height="1.4" fill="#1a78d8"/><rect x="0.8" y="159" width="1.3" height="1.4" fill="#1a78d8"/><rect x="0.8" y="162" width="1.3" height="1.4" fill="#1a78d8"/><rect x="0.8" y="165" width="1.3" height="1.4" fill="#1a78d8"/></svg>
<svg style="position:absolute;left:556px;top:432.5px" width="6" height="10" viewBox="0 0 6 10"><path d="M4.7,1.6 L1.5,5 L4.7,8.4" fill="none" stroke="#000" stroke-width="1.5"/></svg>
<svg style="position:absolute;left:556px;top:614.4px" width="6" height="10" viewBox="0 0 6 10"><path d="M4.7,1.6 L1.5,5 L4.7,8.4" fill="none" stroke="#000" stroke-width="1.5"/></svg>
<div style="left:566px;top:225px;width:1150px;height:21px;background:#fff;border:1px solid #6d6d6d;box-sizing:border-box;"></div>
<svg style="position:absolute;left:568px;top:228px" width="16" height="16" viewBox="0 0 16 16"><circle cx="9.9" cy="7.4" r="4.9" fill="none" stroke="#3b74b5" stroke-width="2"/><path d="M6.5,11 L1.2,15.8" stroke="#3b74b5" stroke-width="2.5" stroke-linecap="butt"/></svg>
<svg style="position:absolute;left:1699px;top:230px" width="14" height="14" viewBox="0 0 14 14"><path d="M1.2,1.2 L12.8,12.8 M12.8,1.2 L1.2,12.8" stroke="#a9a9a9" stroke-width="3.2" stroke-linecap="butt"/></svg>
<div style="left:566px;top:249px;width:1150px;height:230px;background:#fff;border:1px solid #a5a5a5;box-sizing:border-box;"></div>
<div style="left:567px;top:250px;width:1131px;height:34px;background:#f4f4f4;"></div>
<div style="left:567px;top:284px;width:1131px;height:1px;background:#b9b9b9;"></div>
<div style="left:567px;top:285px;width:1131px;height:29px;background:#f6f6f6;"></div>
<div style="left:567px;top:314px;width:1131px;height:1px;background:#c4c4c4;"></div>
<div style="left:567px;top:315px;width:1131px;height:19px;background:#ebebeb;"></div>
<div style="left:567px;top:334px;width:1131px;height:1px;background:#c4c4c4;"></div>
<div style="left:567px;top:335px;width:1131px;height:4px;background:#f7f7f7;"></div>
<div style="left:567px;top:339px;width:1131px;height:1px;background:#d0d0d0;"></div>
<div style="left:586px;top:285px;width:1px;height:29px;background:#c6c6c6;"></div>
<div style="left:606px;top:285px;width:1px;height:29px;background:#c6c6c6;"></div>
<div style="left:716px;top:285px;width:1px;height:29px;background:#c6c6c6;"></div>
<div style="left:825px;top:285px;width:1px;height:29px;background:#c6c6c6;"></div>
<div style="left:934px;top:285px;width:1px;height:29px;background:#c6c6c6;"></div>
<div style="left:1043px;top:285px;width:1px;height:29px;background:#c6c6c6;"></div>
<div style="left:1152px;top:285px;width:1px;height:29px;background:#c6c6c6;"></div>
<div style="left:1261px;top:285px;width:1px;height:29px;background:#c6c6c6;"></div>
<div style="left:1370px;top:285px;width:1px;height:29px;background:#c6c6c6;"></div>
<div style="left:1479px;top:285px;width:1px;height:29px;background:#c6c6c6;"></div>
<div style="left:1588px;top:285px;width:1px;height:29px;background:#c6c6c6;"></div>
<div style="left:1697px;top:285px;width:1px;height:54px;background:#c6c6c6;"></div>
<svg style="position:absolute;left:610px;top:318.8px" width="17" height="12" viewBox="0 0 17 12"><rect x="4.4" y="0.2" width="7.2" height="10.9" rx="0.7" fill="#6aa58b"/><text x="0.2" y="8.1" font-family="Liberation Mono, monospace" font-size="7.6" font-weight="bold" textLength="3.2" lengthAdjust="spacingAndGlyphs" fill="#4a4a4a">A</text><text x="6.4" y="8.1" font-family="Liberation Mono, monospace" font-size="7.6" font-weight="bold" textLength="3.2" lengthAdjust="spacingAndGlyphs" fill="#eef6f2">B</text><text x="12.4" y="8.1" font-family="Liberation Mono, monospace" font-size="7.6" font-weight="bold" textLength="3.2" lengthAdjust="spacingAndGlyphs" fill="#4a4a4a">C</text></svg>
<svg style="position:absolute;left:720px;top:318.8px" width="17" height="12" viewBox="0 0 17 12"><rect x="4.4" y="0.2" width="7.2" height="10.9" rx="0.7" fill="#6aa58b"/><text x="0.2" y="8.1" font-family="Liberation Mono, monospace" font-size="7.6" font-weight="bold" textLength="3.2" lengthAdjust="spacingAndGlyphs" fill="#4a4a4a">A</text><text x="6.4" y="8.1" font-family="Liberation Mono, monospace" font-size="7.6" font-weight="bold" textLength="3.2" lengthAdjust="spacingAndGlyphs" fill="#eef6f2">B</text><text x="12.4" y="8.1" font-family="Liberation Mono, monospace" font-size="7.6" font-weight="bold" textLength="3.2" lengthAdjust="spacingAndGlyphs" fill="#4a4a4a">C</text></svg>
<svg style="position:absolute;left:829px;top:318.8px" width="17" height="12" viewBox="0 0 17 12"><rect x="4.4" y="0.2" width="7.2" height="10.9" rx="0.7" fill="#6aa58b"/><text x="0.2" y="8.1" font-family="Liberation Mono, monospace" font-size="7.6" font-weight="bold" textLength="3.2" lengthAdjust="spacingAndGlyphs" fill="#4a4a4a">A</text><text x="6.4" y="8.1" font-family="Liberation Mono, monospace" font-size="7.6" font-weight="bold" textLength="3.2" lengthAdjust="spacingAndGlyphs" fill="#eef6f2">B</text><text x="12.4" y="8.1" font-family="Liberation Mono, monospace" font-size="7.6" font-weight="bold" textLength="3.2" lengthAdjust="spacingAndGlyphs" fill="#4a4a4a">C</text></svg>
<svg style="position:absolute;left:938px;top:318.8px" width="17" height="12" viewBox="0 0 17 12"><rect x="4.4" y="0.2" width="7.2" height="10.9" rx="0.7" fill="#6aa58b"/><text x="0.2" y="8.1" font-family="Liberation Mono, monospace" font-size="7.6" font-weight="bold" textLength="3.2" lengthAdjust="spacingAndGlyphs" fill="#4a4a4a">A</text><text x="6.4" y="8.1" font-family="Liberation Mono, monospace" font-size="7.6" font-weight="bold" textLength="3.2" lengthAdjust="spacingAndGlyphs" fill="#eef6f2">B</text><text x="12.4" y="8.1" font-family="Liberation Mono, monospace" font-size="7.6" font-weight="bold" textLength="3.2" lengthAdjust="spacingAndGlyphs" fill="#4a4a4a">C</text></svg>
<svg style="position:absolute;left:1047px;top:318.8px" width="17" height="12" viewBox="0 0 17 12"><rect x="4.4" y="0.2" width="7.2" height="10.9" rx="0.7" fill="#6aa58b"/><text x="0.2" y="8.1" font-family="Liberation Mono, monospace" font-size="7.6" font-weight="bold" textLength="3.2" lengthAdjust="spacingAndGlyphs" fill="#4a4a4a">A</text><text x="6.4" y="8.1" font-family="Liberation Mono, monospace" font-size="7.6" font-weight="bold" textLength="3.2" lengthAdjust="spacingAndGlyphs" fill="#eef6f2">B</text><text x="12.4" y="8.1" font-family="Liberation Mono, monospace" font-size="7.6" font-weight="bold" textLength="3.2" lengthAdjust="spacingAndGlyphs" fill="#4a4a4a">C</text></svg>
<svg style="position:absolute;left:1156px;top:318.8px" width="17" height="12" viewBox="0 0 17 12"><rect x="4.4" y="0.2" width="7.2" height="10.9" rx="0.7" fill="#6aa58b"/><text x="0.2" y="8.1" font-family="Liberation Mono, monospace" font-size="7.6" font-weight="bold" textLength="3.2" lengthAdjust="spacingAndGlyphs" fill="#4a4a4a">A</text><text x="6.4" y="8.1" font-family="Liberation Mono, monospace" font-size="7.6" font-weight="bold" textLength="3.2" lengthAdjust="spacingAndGlyphs" fill="#eef6f2">B</text><text x="12.4" y="8.1" font-family="Liberation Mono, monospace" font-size="7.6" font-weight="bold" textLength="3.2" lengthAdjust="spacingAndGlyphs" fill="#4a4a4a">C</text></svg>
<svg style="position:absolute;left:1265px;top:318.8px" width="17" height="12" viewBox="0 0 17 12"><rect x="4.4" y="0.2" width="7.2" height="10.9" rx="0.7" fill="#6aa58b"/><text x="0.2" y="8.1" font-family="Liberation Mono, monospace" font-size="7.6" font-weight="bold" textLength="3.2" lengthAdjust="spacingAndGlyphs" fill="#4a4a4a">A</text><text x="6.4" y="8.1" font-family="Liberation Mono, monospace" font-size="7.6" font-weight="bold" textLength="3.2" lengthAdjust="spacingAndGlyphs" fill="#eef6f2">B</text><text x="12.4" y="8.1" font-family="Liberation Mono, monospace" font-size="7.6" font-weight="bold" textLength="3.2" lengthAdjust="spacingAndGlyphs" fill="#4a4a4a">C</text></svg>
<svg style="position:absolute;left:1374px;top:318.8px" width="17" height="12" viewBox="0 0 17 12"><rect x="4.4" y="0.2" width="7.2" height="10.9" rx="0.7" fill="#6aa58b"/><text x="0.2" y="8.1" font-family="Liberation Mono, monospace" font-size="7.6" font-weight="bold" textLength="3.2" lengthAdjust="spacingAndGlyphs" fill="#4a4a4a">A</text><text x="6.4" y="8.1" font-family="Liberation Mono, monospace" font-size="7.6" font-weight="bold" textLength="3.2" lengthAdjust="spacingAndGlyphs" fill="#eef6f2">B</text><text x="12.4" y="8.1" font-family="Liberation Mono, monospace" font-size="7.6" font-weight="bold" textLength="3.2" lengthAdjust="spacingAndGlyphs" fill="#4a4a4a">C</text></svg>
<svg style="position:absolute;left:1483px;top:318.8px" width="17" height="12" viewBox="0 0 17 12"><rect x="4.4" y="0.2" width="7.2" height="10.9" rx="0.7" fill="#6aa58b"/><text x="0.2" y="8.1" font-family="Liberation Mono, monospace" font-size="7.6" font-weight="bold" textLength="3.2" lengthAdjust="spacingAndGlyphs" fill="#4a4a4a">A</text><text x="6.4" y="8.1" font-family="Liberation Mono, monospace" font-size="7.6" font-weight="bold" textLength="3.2" lengthAdjust="spacingAndGlyphs" fill="#eef6f2">B</text><text x="12.4" y="8.1" font-family="Liberation Mono, monospace" font-size="7.6" font-weight="bold" textLength="3.2" lengthAdjust="spacingAndGlyphs" fill="#4a4a4a">C</text></svg>
<svg style="position:absolute;left:568.4px;top:314.6px" width="17" height="17" viewBox="0 0 16 16"><circle cx="9.9" cy="7.4" r="4.9" fill="none" stroke="#3b74b5" stroke-width="2"/><path d="M6.5,11 L1.2,15.8" stroke="#3b74b5" stroke-width="2.5" stroke-linecap="butt"/></svg>
<div style="left:1597px;top:323px;width:8px;height:1px;background:#777;"></div>
<div style="left:1597px;top:326px;width:8px;height:1px;background:#777;"></div>
<div style="left:1615px;top:317px;width:14px;height:14px;background:#3b74b5;"></div>
<div style="left:567px;top:340px;width:1131px;height:19px;background:#fff;"></div>
<div style="left:570px;top:343px;width:13px;height:13px;background:#fff;border:1px solid #9a9a9a;box-sizing:border-box;"></div>
<svg style="position:absolute;left:589px;top:340.6px" width="16" height="16" viewBox="0 0 16 16"><path d="M15.97,9.61 L15.97,10.79 L14.11,11.45 L13.79,12.23 L14.64,14.01 L13.81,14.84 L12.03,13.99 L11.25,14.31 L10.59,16.17 L9.41,16.17 L8.75,14.31 L7.97,13.99 L6.19,14.84 L5.36,14.01 L6.21,12.23 L5.89,11.45 L4.03,10.79 L4.03,9.61 L5.89,8.95 L6.21,8.17 L5.36,6.39 L6.19,5.56 L7.97,6.41 L8.75,6.09 L9.41,4.23 L10.59,4.23 L11.25,6.09 L12.03,6.41 L13.81,5.56 L14.64,6.39 L13.79,8.17 L14.11,8.95Z M11.90,10.20 A1.9,1.9 0 1 0 8.10,10.20 A1.9,1.9 0 1 0 11.90,10.20Z" fill="#5c5c5c" fill-rule="evenodd"/><path d="M7.57,3.49 L7.57,4.51 L6.10,4.99 L5.76,5.58 L6.07,7.09 L5.19,7.60 L4.04,6.58 L3.36,6.58 L2.21,7.60 L1.33,7.09 L1.64,5.58 L1.30,4.99 L-0.17,4.51 L-0.17,3.49 L1.30,3.01 L1.64,2.42 L1.33,0.91 L2.21,0.40 L3.36,1.42 L4.04,1.42 L5.19,0.40 L6.07,0.91 L5.76,2.42 L6.10,3.01Z M4.80,4.00 A1.1,1.1 0 1 0 2.60,4.00 A1.1,1.1 0 1 0 4.80,4.00Z" fill="#3b74b5" fill-rule="evenodd"/></svg>
<svg style="position:absolute;left:1593px;top:342px" width="14" height="14" viewBox="0 0 14 14"><path d="M1.9,1.7 L12.3,12.6 M12.3,1.7 L1.9,12.6" stroke="#d2482f" stroke-width="3.3" stroke-linecap="butt"/></svg>
<div style="left:567px;top:359px;width:1131px;height:19px;background:#ebebeb;"></div>
<div style="left:570px;top:362px;width:13px;height:13px;background:#fff;border:1px solid #9a9a9a;box-sizing:border-box;"></div>
<svg style="position:absolute;left:589px;top:359.6px" width="16" height="16" viewBox="0 0 16 16"><path d="M15.97,9.61 L15.97,10.79 L14.11,11.45 L13.79,12.23 L14.64,14.01 L13.81,14.84 L12.03,13.99 L11.25,14.31 L10.59,16.17 L9.41,16.17 L8.75,14.31 L7.97,13.99 L6.19,14.84 L5.36,14.01 L6.21,12.23 L5.89,11.45 L4.03,10.79 L4.03,9.61 L5.89,8.95 L6.21,8.17 L5.36,6.39 L6.19,5.56 L7.97,6.41 L8.75,6.09 L9.41,4.23 L10.59,4.23 L11.25,6.09 L12.03,6.41 L13.81,5.56 L14.64,6.39 L13.79,8.17 L14.11,8.95Z M11.90,10.20 A1.9,1.9 0 1 0 8.10,10.20 A1.9,1.9 0 1 0 11.90,10.20Z" fill="#5c5c5c" fill-rule="evenodd"/><path d="M7.57,3.49 L7.57,4.51 L6.10,4.99 L5.76,5.58 L6.07,7.09 L5.19,7.60 L4.04,6.58 L3.36,6.58 L2.21,7.60 L1.33,7.09 L1.64,5.58 L1.30,4.99 L-0.17,4.51 L-0.17,3.49 L1.30,3.01 L1.64,2.42 L1.33,0.91 L2.21,0.40 L3.36,1.42 L4.04,1.42 L5.19,0.40 L6.07,0.91 L5.76,2.42 L6.10,3.01Z M4.80,4.00 A1.1,1.1 0 1 0 2.60,4.00 A1.1,1.1 0 1 0 4.80,4.00Z" fill="#3b74b5" fill-rule="evenodd"/></svg>
<svg style="position:absolute;left:1593px;top:361px" width="14" height="14" viewBox="0 0 14 14"><path d="M1.9,1.7 L12.3,12.6 M12.3,1.7 L1.9,12.6" stroke="#d2482f" stroke-width="3.3" stroke-linecap="butt"/></svg>
<div style="left:567px;top:378px;width:1131px;height:19px;background:#fff;"></div>
<div style="left:570px;top:381px;width:13px;height:13px;background:#fff;border:1px solid #9a9a9a;box-sizing:border-box;"></div>
<svg style="position:absolute;left:589px;top:378.6px" width="16" height="16" viewBox="0 0 16 16"><path d="M15.97,9.61 L15.97,10.79 L14.11,11.45 L13.79,12.23 L14.64,14.01 L13.81,14.84 L12.03,13.99 L11.25,14.31 L10.59,16.17 L9.41,16.17 L8.75,14.31 L7.97,13.99 L6.19,14.84 L5.36,14.01 L6.21,12.23 L5.89,11.45 L4.03,10.79 L4.03,9.61 L5.89,8.95 L6.21,8.17 L5.36,6.39 L6.19,5.56 L7.97,6.41 L8.75,6.09 L9.41,4.23 L10.59,4.23 L11.25,6.09 L12.03,6.41 L13.81,5.56 L14.64,6.39 L13.79,8.17 L14.11,8.95Z M11.90,10.20 A1.9,1.9 0 1 0 8.10,10.20 A1.9,1.9 0 1 0 11.90,10.20Z" fill="#5c5c5c" fill-rule="evenodd"/><path d="M7.57,3.49 L7.57,4.51 L6.10,4.99 L5.76,5.58 L6.07,7.09 L5.19,7.60 L4.04,6.58 L3.36,6.58 L2.21,7.60 L1.33,7.09 L1.64,5.58 L1.30,4.99 L-0.17,4.51 L-0.17,3.49 L1.30,3.01 L1.64,2.42 L1.33,0.91 L2.21,0.40 L3.36,1.42 L4.04,1.42 L5.19,0.40 L6.07,0.91 L5.76,2.42 L6.10,3.01Z M4.80,4.00 A1.1,1.1 0 1 0 2.60,4.00 A1.1,1.1 0 1 0 4.80,4.00Z" fill="#3b74b5" fill-rule="evenodd"/></svg>
<svg style="position:absolute;left:1593px;top:380px" width="14" height="14" viewBox="0 0 14 14"><path d="M1.9,1.7 L12.3,12.6 M12.3,1.7 L1.9,12.6" stroke="#d2482f" stroke-width="3.3" stroke-linecap="butt"/></svg>
<div style="left:567px;top:397px;width:1131px;height:19px;background:#cee5fa;"></div>
<div style="left:717px;top:397px;width:109px;height:19px;background:#ebebeb;"></div>
<div style="left:889px;top:398px;width:1px;height:17px;background:#f4f9fe;"></div>
<div style="left:570px;top:400px;width:13px;height:13px;background:#fff;border:1px solid #9a9a9a;box-sizing:border-box;"></div>
<svg style="position:absolute;left:571px;top:401px" width="11" height="11" viewBox="0 0 11 11"><path d="M1.6,5.6 L4.2,8.4 L9.4,2.4" fill="none" stroke="#222" stroke-width="1.7"/></svg>
<svg style="position:absolute;left:589px;top:398px" width="16" height="16" viewBox="0 0 16 16"><rect x="1.9" y="1.8" width="11.3" height="6.5" fill="#fff" stroke="#3b74b5" stroke-width="1.2"/><polygon points="1.6,10.2 13.6,10.2 15.2,14 0.1,14" fill="#3b74b5"/><rect x="6" y="11.8" width="3.4" height="1" fill="#dce8f5"/></svg>
<svg style="position:absolute;left:1593px;top:399px" width="14" height="14" viewBox="0 0 14 14"><path d="M1.9,1.7 L12.3,12.6 M12.3,1.7 L1.9,12.6" stroke="#d2482f" stroke-width="3.3" stroke-linecap="butt"/></svg>
<div style="left:567px;top:416px;width:1131px;height:19px;background:#fff;"></div>
<div style="left:570px;top:419px;width:13px;height:13px;background:#fff;border:1px solid #9a9a9a;box-sizing:border-box;"></div>
<svg style="position:absolute;left:589px;top:417px" width="16" height="16" viewBox="0 0 16 16"><rect x="1.9" y="1.8" width="11.3" height="6.5" fill="#fff" stroke="#3b74b5" stroke-width="1.2"/><polygon points="1.6,10.2 13.6,10.2 15.2,14 0.1,14" fill="#3b74b5"/><rect x="6" y="11.8" width="3.4" height="1" fill="#dce8f5"/></svg>
<svg style="position:absolute;left:1593px;top:418px" width="14" height="14" viewBox="0 0 14 14"><path d="M1.9,1.7 L12.3,12.6 M12.3,1.7 L1.9,12.6" stroke="#d2482f" stroke-width="3.3" stroke-linecap="butt"/></svg>
<div style="left:567px;top:435px;width:1131px;height:19px;background:#ebebeb;"></div>
<div style="left:570px;top:438px;width:13px;height:13px;background:#fff;border:1px solid #9a9a9a;box-sizing:border-box;"></div>
<svg style="position:absolute;left:589px;top:436px" width="16" height="16" viewBox="0 0 16 16"><rect x="1.9" y="1.8" width="11.3" height="6.5" fill="#fff" stroke="#3b74b5" stroke-width="1.2"/><polygon points="1.6,10.2 13.6,10.2 15.2,14 0.1,14" fill="#3b74b5"/><rect x="6" y="11.8" width="3.4" height="1" fill="#dce8f5"/></svg>
<svg style="position:absolute;left:1593px;top:437px" width="14" height="14" viewBox="0 0 14 14"><path d="M1.9,1.7 L12.3,12.6 M12.3,1.7 L1.9,12.6" stroke="#d2482f" stroke-width="3.3" stroke-linecap="butt"/></svg>
<div style="left:567px;top:454px;width:1131px;height:19px;background:#fff;"></div>
<div style="left:570px;top:457px;width:13px;height:13px;background:#fff;border:1px solid #9a9a9a;box-sizing:border-box;"></div>
<svg style="position:absolute;left:589px;top:455px" width="16" height="16" viewBox="0 0 16 16"><rect x="1.9" y="1.8" width="11.3" height="6.5" fill="#fff" stroke="#3b74b5" stroke-width="1.2"/><polygon points="1.6,10.2 13.6,10.2 15.2,14 0.1,14" fill="#3b74b5"/><rect x="6" y="11.8" width="3.4" height="1" fill="#dce8f5"/></svg>
<svg style="position:absolute;left:1593px;top:456px" width="14" height="14" viewBox="0 0 14 14"><path d="M1.9,1.7 L12.3,12.6 M12.3,1.7 L1.9,12.6" stroke="#d2482f" stroke-width="3.3" stroke-linecap="butt"/></svg>
<div style="left:567px;top:473px;width:1131px;height:5px;background:#ebebeb;"></div>
<div style="left:570px;top:476px;width:13px;height:3px;background:#fff;"></div>
<div style="left:570px;top:476px;width:13px;height:1px;background:#8e8e8e;"></div>
<div style="left:570px;top:476px;width:1px;height:3px;background:#8e8e8e;"></div>
<div style="left:582px;top:476px;width:1px;height:3px;background:#8e8e8e;"></div>
<div style="left:592px;top:476px;width:10px;height:1px;background:#3b74b5;"></div>
<div style="left:592px;top:476px;width:1px;height:3px;background:#3b74b5;"></div>
<div style="left:601px;top:476px;width:1px;height:3px;background:#3b74b5;"></div>
<svg style="position:absolute;left:1593px;top:475px" width="14" height="3" viewBox="0 0 14 3"><path d="M1.9,1.7 L12.3,12.6 M12.3,1.7 L1.9,12.6" stroke="#d2482f" stroke-width="3.3" stroke-linecap="butt"/></svg>
<div style="left:1698px;top:250px;width:17px;height:228px;background:#f0f0f0;"></div>
<div style="left:1698px;top:267px;width:17px;height:68px;background:#cdcdcd;"></div>
<svg style="position:absolute;left:1702px;top:255px" width="10" height="7" viewBox="0 0 10 7"><path d="M1,5.6L5,1.6L9,5.6" fill="none" stroke="#555" stroke-width="1.6"/></svg>
<svg style="position:absolute;left:1702px;top:466px" width="10" height="7" viewBox="0 0 10 7"><path d="M1,1.4L5,5.4L9,1.4" fill="none" stroke="#555" stroke-width="1.6"/></svg>
<div style="left:566px;top:551px;width:1148px;height:307px;background:#fff;border:1px solid #dcdcdc;box-sizing:border-box;"></div>
<div style="left:566px;top:531px;width:61px;height:21px;background:#fff;border:1px solid #dcdcdc;box-sizing:border-box;border-bottom:none;"></div>
<div style="left:626px;top:533px;width:54px;height:19px;background:#f0f0f0;border:1px solid #d9d9d9;box-sizing:border-box;"></div>
<div style="left:679px;top:533px;width:162px;height:19px;background:#f0f0f0;border:1px solid #d9d9d9;box-sizing:border-box;"></div>
<div style="left:840px;top:533px;width:162px;height:19px;background:#f0f0f0;border:1px solid #d9d9d9;box-sizing:border-box;"></div>
<div style="left:1001px;top:533px;width:67px;height:19px;background:#f0f0f0;border:1px solid #d9d9d9;box-sizing:border-box;"></div>
<div style="left:1067px;top:533px;width:74px;height:19px;background:#f0f0f0;border:1px solid #d9d9d9;box-sizing:border-box;"></div>
<div style="left:1140px;top:533px;width:46px;height:19px;background:#f0f0f0;border:1px solid #d9d9d9;box-sizing:border-box;"></div>
<div style="left:1185px;top:533px;width:53px;height:19px;background:#f0f0f0;border:1px solid #d9d9d9;box-sizing:border-box;"></div>
<div style="left:1237px;top:533px;width:99px;height:19px;background:#f0f0f0;border:1px solid #d9d9d9;box-sizing:border-box;"></div>
<div style="left:1335px;top:533px;width:52px;height:19px;background:#f0f0f0;border:1px solid #d9d9d9;box-sizing:border-box;"></div>
<div style="left:657px;top:561px;width:458px;height:21px;background:#f0f0f0;border:1px solid #7a7a7a;box-sizing:border-box;"></div>
<div style="left:657px;top:608px;width:458px;height:21px;background:#f0f0f0;border:1px solid #7a7a7a;box-sizing:border-box;"></div>
<div style="left:657px;top:635px;width:458px;height:21px;background:#f0f0f0;border:1px solid #7a7a7a;box-sizing:border-box;"></div>
<div style="left:657px;top:662px;width:458px;height:21px;background:#f0f0f0;border:1px solid #7a7a7a;box-sizing:border-box;"></div>
<div style="left:657px;top:689px;width:458px;height:21px;background:#f0f0f0;border:1px solid #7a7a7a;box-sizing:border-box;"></div>
<div style="left:657px;top:736px;width:458px;height:21px;background:#f0f0f0;border:1px solid #7a7a7a;box-sizing:border-box;"></div>
<div style="left:657px;top:763px;width:458px;height:21px;background:#f0f0f0;border:1px solid #7a7a7a;box-sizing:border-box;"></div>
<div style="left:657px;top:790px;width:458px;height:21px;background:#f0f0f0;border:1px solid #7a7a7a;box-sizing:border-box;"></div>
<div style="left:1220px;top:561px;width:465px;height:21px;background:#f0f0f0;border:1px solid #7a7a7a;box-sizing:border-box;"></div>
<div style="left:1220px;top:608px;width:465px;height:21px;background:#f0f0f0;border:1px solid #7a7a7a;box-sizing:border-box;"></div>
<div style="left:1220px;top:635px;width:465px;height:21px;background:#f0f0f0;border:1px solid #7a7a7a;box-sizing:border-box;"></div>
<div style="left:1220px;top:662px;width:465px;height:21px;background:#f0f0f0;border:1px solid #7a7a7a;box-sizing:border-box;"></div>
<div style="left:1220px;top:689px;width:465px;height:21px;background:#f0f0f0;border:1px solid #7a7a7a;box-sizing:border-box;"></div>
<div style="left:1220px;top:736px;width:465px;height:21px;background:#f0f0f0;border:1px solid #7a7a7a;box-sizing:border-box;"></div>
<div style="left:1220px;top:763px;width:465px;height:21px;background:#f0f0f0;border:1px solid #7a7a7a;box-sizing:border-box;"></div>
<div style="left:580px;top:835px;width:1105px;height:21px;background:#f0f0f0;border:1px solid #7a7a7a;box-sizing:border-box;border-bottom:none;"></div>
<div style="left:1666px;top:836px;width:1px;height:20px;background:#fff;"></div>
<div style="left:1667px;top:836px;width:17px;height:20px;background:#f0f0f0;"></div>
<svg style="position:absolute;left:1670px;top:843px" width="11" height="7" viewBox="0 0 11 7"><path d="M2,5.8L5.5,2.3L9,5.8" fill="none" stroke="#c2c2c2" stroke-width="1.8"/></svg>
<div style="left:1696px;top:555px;width:16px;height:302px;background:#f0f0f0;"></div>
<div style="left:1696px;top:572px;width:15px;height:255px;background:#c9c9c9;"></div>
<svg style="position:absolute;left:1699px;top:560px" width="10" height="7" viewBox="0 0 10 7"><path d="M1.6,5.4L5,2L8.4,5.4" fill="none" stroke="#444" stroke-width="1.8"/></svg>
<svg style="position:absolute;left:1699px;top:844px" width="10" height="7" viewBox="0 0 10 7"><path d="M1.6,1.6L5,5L8.4,1.6" fill="none" stroke="#444" stroke-width="1.8"/></svg>
<svg id="tx" width="1721" height="888" viewBox="0 0 1721 888">
<defs><filter id="blur" x="-5%" y="-30%" width="110%" height="160%"><feGaussianBlur stdDeviation="1.15 0.8"/></filter>
<filter id="blur2" x="-5%" y="-30%" width="110%" height="160%"><feGaussianBlur stdDeviation="1.1 0.8"/></filter>
<clipPath id="gclip"><rect x="567" y="473" width="1131" height="5"/></clipPath></defs>
<text x="365.4" y="23" font-size="12" fill="#fff" textLength="86.7" lengthAdjust="spacing">Hardware Assets</text>
<text x="875.2" y="21" font-size="12" fill="#fff" text-anchor="middle" textLength="335.7" lengthAdjust="spacing">ACMP Console -- Version 6.5.0 -- Angemeldet als Administrator</text>
<text x="15" y="53" font-size="12" fill="#222" textLength="37.6" lengthAdjust="spacing">System</text>
<text x="82" y="53" font-size="12" fill="#222" textLength="49.4" lengthAdjust="spacing">Monitore</text>
<text x="158" y="53" font-size="12" fill="#222" textLength="68.0" lengthAdjust="spacing">Stammdaten</text>
<text x="253.1" y="53" font-size="12" fill="#222" textLength="87.6" lengthAdjust="spacing">Abfrageaktionen</text>
<text x="391" y="53" font-size="12" fill="#111" font-weight="bold" textLength="35.3" lengthAdjust="spacing">Assets</text>
<text x="56" y="119" font-size="12" fill="#222" text-anchor="middle" textLength="67.6" lengthAdjust="spacing">Aktualisieren</text>
<text x="159" y="119" font-size="12" fill="#222" text-anchor="middle" textLength="61.7" lengthAdjust="spacing">Hinzufügen</text>
<text x="234" y="119" font-size="12" fill="#222" text-anchor="middle" textLength="55.5" lengthAdjust="spacing">Bearbeiten</text>
<text x="300" y="119" font-size="12" fill="#222" text-anchor="middle" textLength="43.6" lengthAdjust="spacing">Löschen</text>
<text x="367" y="119" font-size="12" fill="#222" text-anchor="middle" textLength="58.6" lengthAdjust="spacing">Duplizieren</text>
<text x="444" y="119" font-size="12" fill="#222" text-anchor="middle" textLength="61.7" lengthAdjust="spacing">Importieren</text>
<text x="520.3" y="119" font-size="12" fill="#222" text-anchor="middle" textLength="28.0" lengthAdjust="spacing">Asset</text>
<text x="520.3" y="134" font-size="12" fill="#222" text-anchor="middle" textLength="58.6" lengthAdjust="spacing">Collections</text>
<text x="595" y="119" font-size="12" fill="#222" text-anchor="middle" textLength="57.5" lengthAdjust="spacing">Assettypen</text>
<text x="684.5" y="119" font-size="12" fill="#222" text-anchor="middle" textLength="88.9" lengthAdjust="spacing">Nummernprofile</text>
<text x="792" y="119" font-size="12" fill="#222" text-anchor="middle" textLength="32.7" lengthAdjust="spacing">Assets</text>
<text x="792" y="134" font-size="12" fill="#222" text-anchor="middle" textLength="49.9" lengthAdjust="spacing">ausleihen</text>
<text x="866.4" y="119" font-size="12" fill="#a6a6a6" text-anchor="middle" textLength="32.7" lengthAdjust="spacing">Assets</text>
<text x="866.4" y="134" font-size="12" fill="#a6a6a6" text-anchor="middle" textLength="68.0" lengthAdjust="spacing">zurückgeben</text>
<text x="963" y="119" font-size="12" fill="#222" text-anchor="middle" textLength="47.8" lengthAdjust="spacing">Vorschau</text>
<text x="1025" y="119" font-size="12" fill="#222" text-anchor="middle" textLength="43.6" lengthAdjust="spacing">Drucken</text>
<text x="56" y="154" font-size="12" fill="#333" text-anchor="middle" textLength="54.0" lengthAdjust="spacing">Allgemein</text>
<text x="428.7" y="154" font-size="12" fill="#333" text-anchor="middle" textLength="33.0" lengthAdjust="spacing">Assets</text>
<text x="833.8" y="154" font-size="12" fill="#333" text-anchor="middle" textLength="45.0" lengthAdjust="spacing">Ausleihe</text>
<text x="992.5" y="154" font-size="12" fill="#333" text-anchor="middle" textLength="79.0" lengthAdjust="spacing">Assets drucken</text>
<text x="5" y="881" font-size="11" fill="#222" textLength="228.0" lengthAdjust="spacing">© Aagon GmbH 2002 - 2023, all rights reserved</text>
<text x="8.5" y="182" font-size="11" fill="#111" textLength="51.0" lengthAdjust="spacing">Navigation</text>
<text x="50.5" y="203.8" font-size="11" fill="#000" textLength="43.2" lengthAdjust="spacing">Überblick</text>
<text x="50.5" y="221.8" font-size="11" fill="#000" textLength="92.0" lengthAdjust="spacing">Client Management</text>
<text x="50.5" y="239.8" font-size="11" fill="#000" textLength="82.0" lengthAdjust="spacing">Client Commands</text>
<text x="50.5" y="257.8" font-size="11" fill="#000" textLength="92.2" lengthAdjust="spacing">Patch Management</text>
<text x="50.5" y="275.8" font-size="11" fill="#000" textLength="38.5" lengthAdjust="spacing">Security</text>
<text x="50.5" y="293.8" font-size="11" fill="#000" textLength="21.7" lengthAdjust="spacing">Jobs</text>
<text x="50.5" y="311.8" font-size="11" fill="#000" textLength="74.2" lengthAdjust="spacing">OS Deployment</text>
<text x="50.5" y="329.8" font-size="11" fill="#000" textLength="92.0" lengthAdjust="spacing">Asset Management</text>
<text x="68.5" y="347.8" font-size="11" fill="#000" textLength="81.8" lengthAdjust="spacing">Hardware Assets</text>
<text x="50.5" y="365.8" font-size="11" fill="#000" textLength="91.2" lengthAdjust="spacing">Lizenzmanagement</text>
<text x="50.5" y="383.8" font-size="11" fill="#000" textLength="42.9" lengthAdjust="spacing">Helpdesk</text>
<text x="50.5" y="401.8" font-size="11" fill="#000" textLength="34.7" lengthAdjust="spacing">System</text>
<text x="249" y="182" font-size="11" fill="#111" textLength="183.5" lengthAdjust="spacing">Asset Management / Hardware Assets</text>
<text x="250.7" y="209.7" font-size="11" fill="#000" textLength="54.6" lengthAdjust="spacing">Assettypen</text>
<text x="268.3" y="238.6" font-size="11" fill="#666" textLength="35.0" lengthAdjust="spacing">Suchen</text>
<text x="295.6" y="264" font-size="11" fill="#000" textLength="74.5" lengthAdjust="spacing">Alle Assets [67]</text>
<text x="313.6" y="282" font-size="11" fill="#000" textLength="69.3" lengthAdjust="spacing">Beamer (3) [3]</text>
<text x="313.6" y="300" font-size="11" fill="#000" textLength="91.1" lengthAdjust="spacing">Computers (0) [20]</text>
<text x="331.6" y="318" font-size="11" fill="#000" textLength="105.1" lengthAdjust="spacing">Desktop PCs (10) [10]</text>
<text x="331.6" y="336" font-size="11" fill="#000" textLength="84.3" lengthAdjust="spacing">Notebooks (7) [7]</text>
<text x="331.6" y="354" font-size="11" fill="#000" textLength="65.4" lengthAdjust="spacing">Server (3) [3]</text>
<text x="313.6" y="372" font-size="11" fill="#000" textLength="72.2" lengthAdjust="spacing">Displays (3) [3]</text>
<text x="313.6" y="390" font-size="11" fill="#000" textLength="95.3" lengthAdjust="spacing">Feuerlöscher (4) [4]</text>
<text x="313.6" y="408" font-size="11" fill="#000" textLength="80.3" lengthAdjust="spacing">Hardware (0) [1]</text>
<text x="331.6" y="426" font-size="11" fill="#000" textLength="52.0" lengthAdjust="spacing">SSD (1) [1]</text>
<text x="313.6" y="444" font-size="11" fill="#000" textLength="94.9" lengthAdjust="spacing">Klimaanlagen (3) [3]</text>
<text x="313.6" y="462" font-size="11" fill="#000" textLength="108.3" lengthAdjust="spacing">Mobile devices (0) [10]</text>
<text x="331.6" y="480" font-size="11" fill="#000" textLength="68.7" lengthAdjust="spacing">Handys (7) [7]</text>
<text x="331.6" y="498" font-size="11" fill="#000" textLength="67.8" lengthAdjust="spacing">Tablets (3) [3]</text>
<text x="313.6" y="516" font-size="11" fill="#000" textLength="82.4" lengthAdjust="spacing">SIM Cards (5) [5]</text>
<text x="313.6" y="534" font-size="11" fill="#000" textLength="66.3" lengthAdjust="spacing">SNMP (0) [17]</text>
<text x="331.6" y="552" font-size="11" fill="#000" textLength="97.9" lengthAdjust="spacing">Access Points (3) [3]</text>
<text x="331.6" y="570" font-size="11" fill="#000" textLength="70.3" lengthAdjust="spacing">Printers (9) [9]</text>
<text x="331.6" y="588" font-size="11" fill="#000" textLength="71.2" lengthAdjust="spacing">Routers (1) [1]</text>
<text x="331.6" y="606" font-size="11" fill="#000" textLength="75.1" lengthAdjust="spacing">Switches (3) [3]</text>
<text x="331.6" y="624" font-size="11" fill="#000" textLength="117.1" lengthAdjust="spacing">Unknown Devices (1) [1]</text>
<text x="313.6" y="642" font-size="11" fill="#000" textLength="82.1" lengthAdjust="spacing">Zertifikate (1) [1]</text>
<text x="569.5" y="216" font-size="16" fill="#4a4a4a" textLength="147.5" lengthAdjust="spacing" stroke="#f0f0f0" stroke-width="0.4" paint-order="fill stroke">Assettyp: &quot;Computers&quot;</text>
<text x="586.3" y="238.6" font-size="11" fill="#444" textLength="35.0" lengthAdjust="spacing">Suchen</text>
<text x="574.6" y="272" font-size="11" fill="#b4b4b4" textLength="354.0" lengthAdjust="spacing">Ziehen Sie einen Spaltenkopf hierhin, um nach dieser Spalte zu gruppieren</text>
<text x="608.8" y="304" font-size="11" fill="#222" textLength="52.6" lengthAdjust="spacing">Assetname</text>
<text x="718.8" y="304" font-size="11" fill="#222" textLength="79.5" lengthAdjust="spacing">Inventarnummer</text>
<text x="827.8" y="304" font-size="11" fill="#222" textLength="42.5" lengthAdjust="spacing">Benutzer</text>
<text x="936.8" y="304" font-size="11" fill="#222" textLength="56.8" lengthAdjust="spacing">Assetstatus</text>
<text x="1045.8" y="304" font-size="11" fill="#222" textLength="66.6" lengthAdjust="spacing">Standort Pfad</text>
<text x="1154.8" y="304" font-size="11" fill="#222" textLength="69.4" lengthAdjust="spacing">Abteilung Pfad</text>
<text x="1263.8" y="304" font-size="11" fill="#222" textLength="83.0" lengthAdjust="spacing">Kostenstelle Pfad</text>
<text x="1372.8" y="304" font-size="11" fill="#222" textLength="68.0" lengthAdjust="spacing">Assettyp Pfad</text>
<text x="1481.8" y="304" font-size="11" fill="#222" textLength="100.8" lengthAdjust="spacing">Asset Collection Pfad</text>
<text x="1590.8" y="304" font-size="11" fill="#222" textLength="72.9" lengthAdjust="spacing">Ist ausgeliehen</text>
<text x="1633.5" y="329" font-size="11" fill="#333" textLength="57.0" lengthAdjust="spacing">nicht verf...</text>
<text x="608.3" y="354" font-size="11" fill="#222" textLength="30.7" lengthAdjust="spacing">ESXi-3</text>
<text x="718.8" y="354" font-size="11" fill="#222" textLength="72.5" lengthAdjust="spacing">Asset-0000068</text>
<text x="827.5" y="354" font-size="11" fill="#222" textLength="73.9" lengthAdjust="spacing">nicht verfügbar</text>
<text x="936.6" y="354" font-size="11" fill="#222" textLength="63.8" lengthAdjust="spacing">In Benutzung</text>
<text x="1045.6" y="354" font-size="11" fill="#222" textLength="73.9" lengthAdjust="spacing">nicht verfügbar</text>
<text x="1154.6" y="354" font-size="11" fill="#222" textLength="73.9" lengthAdjust="spacing">nicht verfügbar</text>
<text x="1263.6" y="354" font-size="11" fill="#222" textLength="73.9" lengthAdjust="spacing">nicht verfügbar</text>
<text x="1372.6" y="354" font-size="11" fill="#222" textLength="87.5" lengthAdjust="spacing">Computers\Server</text>
<text x="1481.6" y="354" font-size="11" fill="#222" textLength="73.9" lengthAdjust="spacing">nicht verfügbar</text>
<text x="1611" y="354" font-size="11" fill="#222" textLength="21.3" lengthAdjust="spacing">Nein</text>
<text x="608.3" y="373" font-size="11" fill="#222" textLength="30.7" lengthAdjust="spacing">ESXi-1</text>
<text x="718.8" y="373" font-size="11" fill="#222" textLength="72.5" lengthAdjust="spacing">Asset-0000069</text>
<text x="827.5" y="373" font-size="11" fill="#222" textLength="73.9" lengthAdjust="spacing">nicht verfügbar</text>
<text x="936.6" y="373" font-size="11" fill="#222" textLength="63.8" lengthAdjust="spacing">In Benutzung</text>
<text x="1045.6" y="373" font-size="11" fill="#222" textLength="73.9" lengthAdjust="spacing">nicht verfügbar</text>
<text x="1154.6" y="373" font-size="11" fill="#222" textLength="73.9" lengthAdjust="spacing">nicht verfügbar</text>
<text x="1263.6" y="373" font-size="11" fill="#222" textLength="73.9" lengthAdjust="spacing">nicht verfügbar</text>
<text x="1372.6" y="373" font-size="11" fill="#222" textLength="87.5" lengthAdjust="spacing">Computers\Server</text>
<text x="1481.6" y="373" font-size="11" fill="#222" textLength="73.9" lengthAdjust="spacing">nicht verfügbar</text>
<text x="1611" y="373" font-size="11" fill="#222" textLength="21.3" lengthAdjust="spacing">Nein</text>
<text x="608.3" y="392" font-size="11" fill="#222" textLength="30.7" lengthAdjust="spacing">ESXi-2</text>
<text x="718.8" y="392" font-size="11" fill="#222" textLength="72.5" lengthAdjust="spacing">Asset-0000070</text>
<text x="827.5" y="392" font-size="11" fill="#222" textLength="73.9" lengthAdjust="spacing">nicht verfügbar</text>
<text x="936.6" y="392" font-size="11" fill="#222" textLength="63.8" lengthAdjust="spacing">In Benutzung</text>
<text x="1045.6" y="392" font-size="11" fill="#222" textLength="73.9" lengthAdjust="spacing">nicht verfügbar</text>
<text x="1154.6" y="392" font-size="11" fill="#222" textLength="73.9" lengthAdjust="spacing">nicht verfügbar</text>
<text x="1263.6" y="392" font-size="11" fill="#222" textLength="73.9" lengthAdjust="spacing">nicht verfügbar</text>
<text x="1372.6" y="392" font-size="11" fill="#222" textLength="87.5" lengthAdjust="spacing">Computers\Server</text>
<text x="1481.6" y="392" font-size="11" fill="#222" textLength="73.9" lengthAdjust="spacing">nicht verfügbar</text>
<text x="1611" y="392" font-size="11" fill="#222" textLength="21.3" lengthAdjust="spacing">Nein</text>
<text x="608.3" y="411" font-size="11" fill="#222" textLength="50.9" lengthAdjust="spacing">Notebooks</text>
<text x="718.8" y="411" font-size="11" fill="#222" textLength="72.5" lengthAdjust="spacing">Asset-0000012</text>
<text x="827.5" y="411" font-size="11" fill="#30307c" textLength="57.7" lengthAdjust="spacing" filter="url(#blur)" opacity="0.95">Ulrich Kluge</text>
<text x="936.6" y="411" font-size="11" fill="#222" textLength="63.8" lengthAdjust="spacing">In Benutzung</text>
<text x="1045.6" y="411" font-size="11" fill="#222" textLength="73.9" lengthAdjust="spacing">nicht verfügbar</text>
<text x="1154.6" y="411" font-size="11" fill="#222" textLength="49.5" lengthAdjust="spacing">Consulting</text>
<text x="1263.6" y="411" font-size="11" fill="#222" textLength="49.5" lengthAdjust="spacing">Consulting</text>
<text x="1372.6" y="411" font-size="11" fill="#222" textLength="102.5" lengthAdjust="spacing">Computers\Notebo...</text>
<text x="1481.6" y="411" font-size="11" fill="#222" textLength="73.9" lengthAdjust="spacing">nicht verfügbar</text>
<text x="1611" y="411" font-size="11" fill="#222" textLength="21.3" lengthAdjust="spacing">Nein</text>
<text x="608.3" y="430" font-size="11" fill="#222" textLength="50.9" lengthAdjust="spacing">Notebooks</text>
<text x="718.8" y="430" font-size="11" fill="#222" textLength="72.5" lengthAdjust="spacing">Asset-0000013</text>
<text x="827.5" y="430" font-size="11" fill="#222" textLength="100.4" lengthAdjust="spacing">FiBu User FiBu-User1</text>
<text x="936.6" y="430" font-size="11" fill="#222" textLength="63.8" lengthAdjust="spacing">In Benutzung</text>
<text x="1045.6" y="430" font-size="11" fill="#222" textLength="73.9" lengthAdjust="spacing">nicht verfügbar</text>
<text x="1154.6" y="430" font-size="11" fill="#222" textLength="58.6" lengthAdjust="spacing">Buchhaltung</text>
<text x="1263.6" y="430" font-size="11" fill="#222" textLength="73.9" lengthAdjust="spacing">nicht verfügbar</text>
<text x="1372.6" y="430" font-size="11" fill="#222" textLength="102.5" lengthAdjust="spacing">Computers\Notebo...</text>
<text x="1481.6" y="430" font-size="11" fill="#222" textLength="73.9" lengthAdjust="spacing">nicht verfügbar</text>
<text x="1611" y="430" font-size="11" fill="#222" textLength="21.3" lengthAdjust="spacing">Nein</text>
<text x="608.3" y="449" font-size="11" fill="#222" textLength="50.9" lengthAdjust="spacing">Notebooks</text>
<text x="718.8" y="449" font-size="11" fill="#222" textLength="72.5" lengthAdjust="spacing">Asset-0000014</text>
<text x="827.5" y="449" font-size="11" fill="#30307c" textLength="90.4" lengthAdjust="spacing" filter="url(#blur)" opacity="0.95">Thorsten Kombrink</text>
<text x="936.6" y="449" font-size="11" fill="#222" textLength="63.8" lengthAdjust="spacing">In Benutzung</text>
<text x="1045.6" y="449" font-size="11" fill="#222" textLength="101.8" lengthAdjust="spacing">Soest\Lange Wend...</text>
<text x="1154.6" y="449" font-size="11" fill="#222" textLength="49.5" lengthAdjust="spacing">Consulting</text>
<text x="1263.6" y="449" font-size="11" fill="#222" textLength="49.5" lengthAdjust="spacing">Consulting</text>
<text x="1372.6" y="449" font-size="11" fill="#222" textLength="102.5" lengthAdjust="spacing">Computers\Notebo...</text>
<text x="1481.6" y="449" font-size="11" fill="#222" textLength="73.9" lengthAdjust="spacing">nicht verfügbar</text>
<text x="1611" y="449" font-size="11" fill="#222" textLength="21.3" lengthAdjust="spacing">Nein</text>
<text x="608.3" y="468" font-size="11" fill="#222" textLength="76.0" lengthAdjust="spacing">4-COFFUH-W10</text>
<text x="718.8" y="468" font-size="11" fill="#222" textLength="72.5" lengthAdjust="spacing">Asset-0000015</text>
<text x="827.5" y="468" font-size="11" fill="#30307c" textLength="79.1" lengthAdjust="spacing" filter="url(#blur)" opacity="0.95">Frank Fuhrmann</text>
<text x="936.6" y="468" font-size="11" fill="#222" textLength="63.8" lengthAdjust="spacing">In Benutzung</text>
<text x="1045.6" y="468" font-size="11" fill="#222" textLength="19.9" lengthAdjust="spacing">Köln</text>
<text x="1154.6" y="468" font-size="11" fill="#222" textLength="49.5" lengthAdjust="spacing">Consulting</text>
<text x="1263.6" y="468" font-size="11" fill="#222" textLength="49.5" lengthAdjust="spacing">Consulting</text>
<text x="1372.6" y="468" font-size="11" fill="#222" textLength="102.5" lengthAdjust="spacing">Computers\Notebo...</text>
<text x="1481.6" y="468" font-size="11" fill="#222" textLength="73.9" lengthAdjust="spacing">nicht verfügbar</text>
<text x="1611" y="468" font-size="11" fill="#222" textLength="21.3" lengthAdjust="spacing">Nein</text>
<text x="608.3" y="487" font-size="11" fill="#222" textLength="50.9" lengthAdjust="spacing" clip-path="url(#gclip)">Notebooks</text>
<text x="718.8" y="487" font-size="11" fill="#222" textLength="72.5" lengthAdjust="spacing" clip-path="url(#gclip)">Asset-0000016</text>
<text x="827.5" y="487" font-size="11" fill="#222" textLength="73.9" lengthAdjust="spacing" clip-path="url(#gclip)">nicht verfügbar</text>
<text x="936.6" y="487" font-size="11" fill="#222" textLength="63.8" lengthAdjust="spacing" clip-path="url(#gclip)">In Benutzung</text>
<text x="1045.6" y="487" font-size="11" fill="#222" textLength="73.9" lengthAdjust="spacing" clip-path="url(#gclip)">nicht verfügbar</text>
<text x="1154.6" y="487" font-size="11" fill="#222" textLength="49.5" lengthAdjust="spacing" clip-path="url(#gclip)">Consulting</text>
<text x="1263.6" y="487" font-size="11" fill="#222" textLength="73.9" lengthAdjust="spacing" clip-path="url(#gclip)">nicht verfügbar</text>
<text x="1372.6" y="487" font-size="11" fill="#222" textLength="102.5" lengthAdjust="spacing" clip-path="url(#gclip)">Computers\Notebo...</text>
<text x="1481.6" y="487" font-size="11" fill="#222" textLength="73.9" lengthAdjust="spacing" clip-path="url(#gclip)">nicht verfügbar</text>
<text x="1611" y="487" font-size="11" fill="#222" textLength="21.3" lengthAdjust="spacing" clip-path="url(#gclip)">Nein</text>
<text x="565.8" y="517.5" font-size="20" fill="#2e2e2e" textLength="167.5" lengthAdjust="spacing" stroke="#f0f0f0" stroke-width="0.5" paint-order="fill stroke">Asset: &quot;Notebooks&quot;</text>
<text x="573.9" y="545" font-size="11" fill="#000" textLength="45.0" lengthAdjust="spacing">Allgemein</text>
<text x="630.9" y="547" font-size="11" fill="#000" textLength="43.2" lengthAdjust="spacing">Finanzen</text>
<text x="685" y="547" font-size="11" fill="#000" textLength="149.8" lengthAdjust="spacing">Benutzerdefinierte Felder (1:1)</text>
<text x="846.8" y="547" font-size="11" fill="#000" textLength="148.9" lengthAdjust="spacing">Benutzerdefinierte Felder (1:n)</text>
<text x="1007.1" y="547" font-size="11" fill="#000" textLength="54.2" lengthAdjust="spacing">Dokumente</text>
<text x="1073.3" y="547" font-size="11" fill="#000" textLength="60.6" lengthAdjust="spacing">Beziehungen</text>
<text x="1147.2" y="547" font-size="11" fill="#000" textLength="32.2" lengthAdjust="spacing">Tickets</text>
<text x="1191.3" y="547" font-size="11" fill="#000" textLength="40.0" lengthAdjust="spacing">Ausleihe</text>
<text x="1243.2" y="547" font-size="11" fill="#000" textLength="86.8" lengthAdjust="spacing">Änderungsverlauf</text>
<text x="1341.5" y="547" font-size="11" fill="#000" textLength="40.9" lengthAdjust="spacing">Lizenzen</text>
<text x="580" y="574.6" font-size="11" fill="#000" textLength="56.5" lengthAdjust="spacing">Assetname:</text>
<text x="659.4" y="574.6" font-size="11" fill="#000" textLength="50.9" lengthAdjust="spacing">Notebooks</text>
<text x="580" y="621.6" font-size="11" fill="#000" textLength="45.8" lengthAdjust="spacing">Benutzer:</text>
<text x="659.4" y="621.6" font-size="11" fill="#0000ff" textLength="57.7" lengthAdjust="spacing" filter="url(#blur2)">Ulrich Kluge</text>
<rect x="659.4" y="622.8" width="57.7" height="1" fill="#0000ff"/>
<text x="580" y="648.6" font-size="11" fill="#000" textLength="47.6" lengthAdjust="spacing">Abteilung:</text>
<text x="659.4" y="648.6" font-size="11" fill="#0000ff" textLength="49.5" lengthAdjust="spacing">Consulting</text>
<rect x="659.4" y="649.8" width="50.5" height="1" fill="#0000ff"/>
<text x="580" y="675.6" font-size="11" fill="#000" textLength="48.7" lengthAdjust="spacing">Hersteller:</text>
<text x="659.4" y="675.6" font-size="11" fill="#0000ff" textLength="35.1" lengthAdjust="spacing">Lenovo</text>
<rect x="659.4" y="676.8" width="35.1" height="1" fill="#0000ff"/>
<text x="580" y="702.6" font-size="11" fill="#000" textLength="61.8" lengthAdjust="spacing">Dienstleister:</text>
<text x="580" y="749.6" font-size="11" fill="#000" textLength="33.3" lengthAdjust="spacing">Status:</text>
<text x="659.4" y="749.6" font-size="11" fill="#000" textLength="63.8" lengthAdjust="spacing">In Benutzung</text>
<text x="580" y="776.6" font-size="11" fill="#000" textLength="34.5" lengthAdjust="spacing">Modell:</text>
<text x="659.4" y="776.6" font-size="11" fill="#000" textLength="24.4" lengthAdjust="spacing">T560</text>
<text x="580" y="803.6" font-size="11" fill="#000" textLength="73.1" lengthAdjust="spacing">Seriennummer:</text>
<text x="659.4" y="803.6" font-size="11" fill="#000" textLength="38.7" lengthAdjust="spacing">SV4JK5</text>
<text x="1130.5" y="574.6" font-size="11" fill="#000" textLength="45.9" lengthAdjust="spacing">Assettyp:</text>
<text x="1222.4" y="574.6" font-size="11" fill="#000" textLength="106.6" lengthAdjust="spacing">Computers\Notebooks</text>
<text x="1130.5" y="621.6" font-size="11" fill="#000" textLength="45.5" lengthAdjust="spacing">Standort:</text>
<text x="1130.5" y="648.6" font-size="11" fill="#000" textLength="61.6" lengthAdjust="spacing">Kostenstelle:</text>
<text x="1222.4" y="648.6" font-size="11" fill="#0000ff" textLength="49.5" lengthAdjust="spacing">Consulting</text>
<rect x="1222.4" y="649.8" width="50.5" height="1" fill="#0000ff"/>
<text x="1130.5" y="675.6" font-size="11" fill="#000" textLength="44.6" lengthAdjust="spacing">Anbieter:</text>
<text x="1130.5" y="702.6" font-size="11" fill="#000" textLength="39.5" lengthAdjust="spacing">Vertrag:</text>
<text x="1130.5" y="749.6" font-size="11" fill="#000" textLength="79.7" lengthAdjust="spacing">Asset Collection:</text>
<text x="1130.5" y="776.6" font-size="11" fill="#000" textLength="83.6" lengthAdjust="spacing">Inventarnummer:</text>
<text x="1222.4" y="776.6" font-size="11" fill="#000" textLength="72.5" lengthAdjust="spacing">Asset-0000012</text>
<text x="580" y="599" font-size="11" fill="#000" font-weight="bold" style="font-family:&quot;DejaVu Sans Condensed&quot;,&quot;Liberation Sans&quot;,sans-serif" textLength="74.4" lengthAdjust="spacing">Stammdaten</text>
<text x="580" y="727" font-size="11" fill="#000" font-weight="bold" style="font-family:&quot;DejaVu Sans Condensed&quot;,&quot;Liberation Sans&quot;,sans-serif" textLength="101.0" lengthAdjust="spacing">Zusätzliche Daten</text>
<text x="580" y="828" font-size="11" fill="#000" textLength="68.4" lengthAdjust="spacing">Beschreibung:</text>
</svg>
</div></body></html>
